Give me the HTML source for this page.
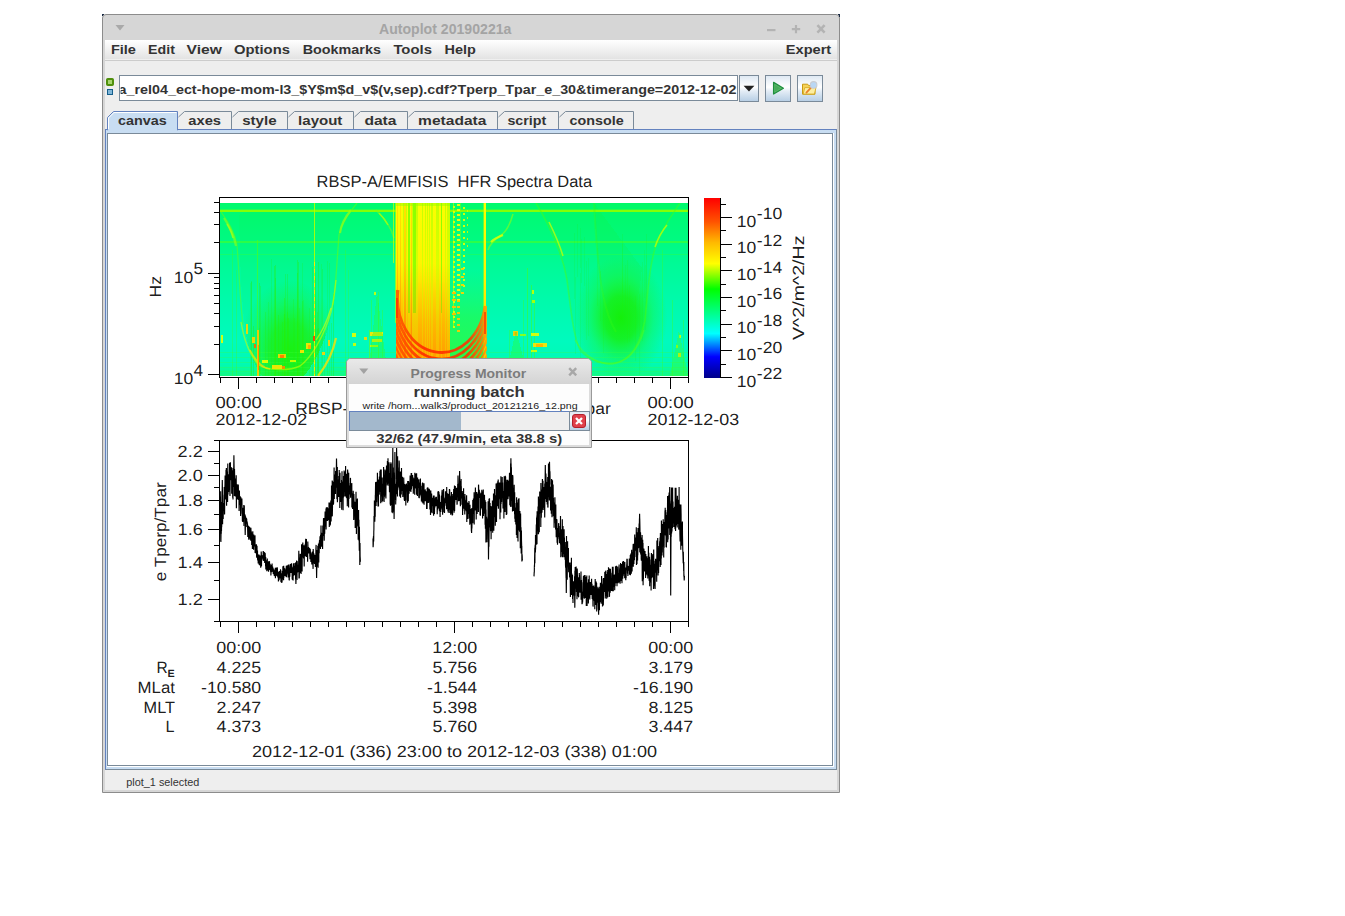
<!DOCTYPE html>
<html lang="en">
<head>
<meta charset="utf-8">
<title>Autoplot 20190221a</title>
<style>
html,body{margin:0;padding:0;background:#fff;}
body{width:1345px;height:916px;position:relative;overflow:hidden;font-family:"Liberation Sans", sans-serif;}
.abs{position:absolute;}
svg{position:absolute;left:0;top:0;overflow:visible;}
svg text{font-family:"Liberation Sans", sans-serif;white-space:pre;}

#win{left:102px;top:14px;width:738px;height:779px;background:#d6d6d6;border-radius:4px 4px 0 0;box-sizing:border-box;border:1px solid #8c8c8c;}
#content{left:105px;top:40px;width:732px;height:750px;background:#eeeeee;}
#menubar{left:105px;top:40px;width:732px;height:19px;background:linear-gradient(#ffffff,#e3e3e3);}
#mb1{left:105px;top:59px;width:732px;height:1px;background:#efefef;}
#mb2{left:105px;top:60px;width:732px;height:1px;background:#cccccc;}
#urlfield{left:119px;top:75px;width:619px;height:26px;box-sizing:border-box;border:1px solid #7a8a99;background:#fff;}
.btn{box-sizing:border-box;border:1px solid #7a8a99;background:linear-gradient(#dfe9f3 0%,#ffffff 45%,#e4edf6 60%,#b8cfe5 100%);}
#pane{left:105px;top:129px;width:732px;height:641px;box-sizing:border-box;background:#c8ddf2;border:1px solid #6382bf;border-right-color:#7a8a99;border-bottom-color:#7a8a99;}
#scroll{left:107px;top:133px;width:727px;height:634px;background:#fff;}
#canvas{left:107px;top:133px;width:726px;height:633px;box-sizing:border-box;border:1px solid #7a8a99;background:#fff;}

</style>
</head>
<body>
<div id="win" class="abs"></div>
<div class="abs" style="left:102px;top:14px;width:2px;height:1px;background:#1a2a44"></div>
<div class="abs" style="left:102px;top:15px;width:1px;height:1px;background:#1a2a44"></div>
<div class="abs" style="left:838px;top:14px;width:2px;height:1px;background:#1a2a44"></div>
<div class="abs" style="left:839px;top:15px;width:1px;height:2px;background:#1a2a44"></div>
<div id="content" class="abs"></div>
<div id="menubar" class="abs"></div><div id="mb1" class="abs"></div><div id="mb2" class="abs"></div>
<div id="urlfield" class="abs"></div>
<div class="abs btn" style="left:739px;top:75px;width:20px;height:27px"></div>
<div class="abs btn" style="left:765px;top:75px;width:26px;height:27px"></div>
<div class="abs btn" style="left:797px;top:75px;width:26px;height:27px"></div>
<div id="pane" class="abs"></div>
<div id="scroll" class="abs"></div>
<div id="canvas" class="abs"></div>
<svg width="1345" height="916" viewBox="0 0 1345 916">
<path d="M115.5 25 L124.5 25 L120 30.5 Z" fill="#a9a9a9"/>
<text x="379.0" y="34.2" font-size="13.8" font-weight="bold" fill="#a4a4a4" text-anchor="start" textLength="132.4" lengthAdjust="spacingAndGlyphs">Autoplot 20190221a</text>
<rect x="767" y="29" width="8.5" height="2.2" fill="#b3b3b3"/>
<path d="M791.8 29.1h8.4M796 25v8.3" stroke="#b3b3b3" stroke-width="2.2" fill="none"/>
<path d="M817.4 25.2l7.2 7.4M824.6 25.2l-7.2 7.4" stroke="#b3b3b3" stroke-width="2.6" fill="none"/>
<text x="110.9" y="54" font-size="13" font-weight="bold" fill="#333333" text-anchor="start" textLength="25.0" lengthAdjust="spacingAndGlyphs">File</text>
<text x="148.1" y="54" font-size="13" font-weight="bold" fill="#333333" text-anchor="start" textLength="26.8" lengthAdjust="spacingAndGlyphs">Edit</text>
<text x="186.6" y="54" font-size="13" font-weight="bold" fill="#333333" text-anchor="start" textLength="35.3" lengthAdjust="spacingAndGlyphs">View</text>
<text x="234.0" y="54" font-size="13" font-weight="bold" fill="#333333" text-anchor="start" textLength="55.9" lengthAdjust="spacingAndGlyphs">Options</text>
<text x="302.7" y="54" font-size="13" font-weight="bold" fill="#333333" text-anchor="start" textLength="78.2" lengthAdjust="spacingAndGlyphs">Bookmarks</text>
<text x="393.4" y="54" font-size="13" font-weight="bold" fill="#333333" text-anchor="start" textLength="38.5" lengthAdjust="spacingAndGlyphs">Tools</text>
<text x="444.6" y="54" font-size="13" font-weight="bold" fill="#333333" text-anchor="start" textLength="31.3" lengthAdjust="spacingAndGlyphs">Help</text>
<text x="785.8" y="54" font-size="13" font-weight="bold" fill="#333333" text-anchor="start" textLength="45.4" lengthAdjust="spacingAndGlyphs">Expert</text>
<rect x="107" y="79" width="6" height="6" rx="0.8" fill="#a6d46e" stroke="#4f8f0c" stroke-width="2"/>
<rect x="107.5" y="89.5" width="5" height="5" fill="#7fb6d8" stroke="#155e8c" stroke-width="1"/>
<clipPath id="urlclip"><rect x="120.6" y="76" width="616.4" height="24"/></clipPath>
<g clip-path="url(#urlclip)"><text x="118.6" y="94.1" font-size="13" font-weight="bold" fill="#333333" text-anchor="start" textLength="617.9" lengthAdjust="spacingAndGlyphs">a_rel04_ect-hope-mom-l3_$Y$m$d_v$(v,sep).cdf?Tperp_Tpar_e_30&amp;timerange=2012-12-02</text></g>
<path d="M743.6 85.8 L754.4 85.8 L749 91.4 Z" fill="#222"/>
<path d="M773.6 82.4 L783.4 88.2 L773.6 94 Z" fill="#5cba6a" stroke="#1f8f3f" stroke-width="1.3" stroke-linejoin="round"/>
<path d="M775 85 L780.6 88.2 L775 91.4 Z" fill="#3da552" opacity="0.7"/>
<path d="M802.5 84.2 h5.2 l1 1.4 h6.3 v8.6 h-12.5 z" fill="#f6d35a" stroke="#c99a12" stroke-width="1"/>
<path d="M803.2 94 l1.6-6.4 h11.2 l-1.6 6.4 z" fill="#fdeea0" stroke="#d4a81c" stroke-width="0.8"/>
<path d="M806.4 92.6 L811.2 87.4" stroke="#e9822a" stroke-width="1.8" stroke-linecap="round"/>
<circle cx="813.6" cy="84.9" r="3.3" fill="#b9d7f5" stroke="#c9ccd2" stroke-width="1.1"/>
<path d="M107.5 130 L107.5 117.5 L113.5 111.5 L177.5 111.5 L177.5 130 Z" fill="#c8ddf2" stroke="#6382bf" stroke-width="1"/>
<path d="M108.5 129 L108.5 118 L114 112.5 L176.5 112.5" fill="none" stroke="#ffffff" stroke-width="1"/>
<rect x="108" y="129" width="69" height="2" fill="#c8ddf2"/>
<rect x="105" y="129" width="3" height="1" fill="#6382bf"/>
<path d="M178.5 117 L184.5 111.5 L231.5 111.5 L231.5 129" fill="none" stroke="#7a8a99" stroke-width="1"/>
<path d="M232.5 117 L238.5 111.5 L287.5 111.5 L287.5 129" fill="none" stroke="#7a8a99" stroke-width="1"/>
<path d="M288.5 117 L294.5 111.5 L353.5 111.5 L353.5 129" fill="none" stroke="#7a8a99" stroke-width="1"/>
<path d="M354.5 117 L360.5 111.5 L407.5 111.5 L407.5 129" fill="none" stroke="#7a8a99" stroke-width="1"/>
<path d="M408.5 117 L414.5 111.5 L497.5 111.5 L497.5 129" fill="none" stroke="#7a8a99" stroke-width="1"/>
<path d="M498.5 117 L504.5 111.5 L558.5 111.5 L558.5 129" fill="none" stroke="#7a8a99" stroke-width="1"/>
<path d="M559.5 117 L565.5 111.5 L633.5 111.5 L633.5 129" fill="none" stroke="#7a8a99" stroke-width="1"/>
<text x="118.1" y="124.5" font-size="13" font-weight="bold" fill="#333333" text-anchor="start" textLength="48.7" lengthAdjust="spacingAndGlyphs">canvas</text>
<text x="188.3" y="124.5" font-size="13" font-weight="bold" fill="#333333" text-anchor="start" textLength="32.7" lengthAdjust="spacingAndGlyphs">axes</text>
<text x="242.2" y="124.5" font-size="13" font-weight="bold" fill="#333333" text-anchor="start" textLength="34.4" lengthAdjust="spacingAndGlyphs">style</text>
<text x="298.1" y="124.5" font-size="13" font-weight="bold" fill="#333333" text-anchor="start" textLength="44.3" lengthAdjust="spacingAndGlyphs">layout</text>
<text x="364.4" y="124.5" font-size="13" font-weight="bold" fill="#333333" text-anchor="start" textLength="32.1" lengthAdjust="spacingAndGlyphs">data</text>
<text x="418.1" y="124.5" font-size="13" font-weight="bold" fill="#333333" text-anchor="start" textLength="68.3" lengthAdjust="spacingAndGlyphs">metadata</text>
<text x="507.4" y="124.5" font-size="13" font-weight="bold" fill="#333333" text-anchor="start" textLength="38.8" lengthAdjust="spacingAndGlyphs">script</text>
<text x="569.5" y="124.5" font-size="13" font-weight="bold" fill="#333333" text-anchor="start" textLength="54.1" lengthAdjust="spacingAndGlyphs">console</text>
<text x="126.3" y="786" font-size="10.5" font-weight="normal" fill="#333333" text-anchor="start" textLength="73" lengthAdjust="spacingAndGlyphs">plot_1 selected</text>
</svg>
<svg width="1345" height="916" viewBox="0 0 1345 916" shape-rendering="crispEdges">
<defs>
<clipPath id="spc"><rect x="220" y="203" width="468" height="173"/></clipPath>
<clipPath id="ybk"><rect x="396" y="203" width="91" height="173"/></clipPath>
<linearGradient id="gbase" x1="0" y1="0" x2="0" y2="1"><stop offset="0" stop-color="#00fa6e"/><stop offset="0.22" stop-color="#00fa82"/><stop offset="0.35" stop-color="#00fa96"/><stop offset="0.55" stop-color="#00faaa"/><stop offset="0.8" stop-color="#00fabe"/><stop offset="0.93" stop-color="#00fab4"/><stop offset="1" stop-color="#14fa82"/></linearGradient>
<radialGradient id="gA" cx="290" cy="350" r="70" gradientUnits="userSpaceOnUse" gradientTransform="translate(290 350) scale(0.72 1) translate(-290 -350)"><stop offset="0" stop-color="#1cf000" stop-opacity="0.9"/><stop offset="0.4" stop-color="#1ef008" stop-opacity="0.75"/><stop offset="0.75" stop-color="#20f418" stop-opacity="0.3"/><stop offset="1" stop-color="#20f418" stop-opacity="0"/></radialGradient>
<linearGradient id="gOw" x1="0" y1="203" x2="0" y2="376" gradientUnits="userSpaceOnUse"><stop offset="0.35" stop-color="#ff8200" stop-opacity="0"/><stop offset="0.7" stop-color="#ff8200" stop-opacity="0.38"/><stop offset="1" stop-color="#ff6e00" stop-opacity="0.5"/></linearGradient>
<radialGradient id="gC" cx="621" cy="318" r="62" gradientUnits="userSpaceOnUse" gradientTransform="translate(621 318) scale(0.75 1) translate(-621 -318)"><stop offset="0" stop-color="#14f000" stop-opacity="0.95"/><stop offset="0.35" stop-color="#18f008" stop-opacity="0.8"/><stop offset="0.7" stop-color="#20f418" stop-opacity="0.3"/><stop offset="1" stop-color="#20f418" stop-opacity="0"/></radialGradient>
<linearGradient id="gY" x1="0" y1="203" x2="0" y2="376" gradientUnits="userSpaceOnUse"><stop offset="0" stop-color="#faff00"/><stop offset="0.45" stop-color="#fff200"/><stop offset="0.75" stop-color="#ffd200"/><stop offset="1" stop-color="#ffb400"/></linearGradient>
<linearGradient id="gO" x1="0" y1="203" x2="0" y2="376" gradientUnits="userSpaceOnUse"><stop offset="0" stop-color="#ffe400"/><stop offset="0.4" stop-color="#ffcc00"/><stop offset="1" stop-color="#ff8c00"/></linearGradient>
<linearGradient id="gL" x1="0" y1="203" x2="0" y2="376" gradientUnits="userSpaceOnUse"><stop offset="0" stop-color="#c8ff00"/><stop offset="0.6" stop-color="#e6ff00"/><stop offset="1" stop-color="#ffe000"/></linearGradient>
<linearGradient id="gG" x1="0" y1="203" x2="0" y2="376" gradientUnits="userSpaceOnUse"><stop offset="0" stop-color="#32fc32"/><stop offset="0.55" stop-color="#1efa3c"/><stop offset="0.8" stop-color="#14fa5a"/><stop offset="1" stop-color="#46ff1e"/></linearGradient>
<linearGradient id="gHz" x1="0" y1="270" x2="0" y2="376" gradientUnits="userSpaceOnUse"><stop offset="0" stop-color="#32fa1e" stop-opacity="0"/><stop offset="0.45" stop-color="#32fa1e" stop-opacity="0.5"/><stop offset="1" stop-color="#3cfa14" stop-opacity="0.75"/></linearGradient>
<linearGradient id="gArc" x1="396" y1="0" x2="487" y2="0" gradientUnits="userSpaceOnUse"><stop offset="0" stop-color="#ff5a00"/><stop offset="0.3" stop-color="#ff2800"/><stop offset="0.8" stop-color="#ff3200"/><stop offset="0.93" stop-color="#ff6e00"/><stop offset="1" stop-color="#ffaa00"/></linearGradient>
</defs>
<g clip-path="url(#spc)">
<rect x="220" y="203" width="468" height="173" fill="url(#gbase)"/>
<path d="M239 215 C240 260 241 300 246 335 C250 355 256 368 262 376 L304 376 C320 356 330 330 335 295 C337 260 338 235 345 215 C330 208 250 208 239 215 Z" fill="url(#gA)"/>
<path d="M239 215 C240 260 241 300 246 335 C250 355 256 368 262 376 L304 376 C320 356 330 330 335 295 C337 260 338 235 345 215 C330 208 250 208 239 215 Z" fill="#1ef01e" opacity="0.07"/>
<path d="M536 203 C548 225 560 250 566 275 C571 300 573 335 580 350 C590 362 605 365 615 363 C630 360 640 345 645 320 C648 290 650 260 657 243 C664 225 672 215 680 203 Z" fill="#1ef01e" opacity="0.08"/>
<rect x="550" y="240" width="130" height="136" fill="url(#gC)"/>
<path d="M594 203 C596 240 598 270 603 295 C606 310 610 320 616 330 L630 330 C636 310 640 290 642 268 Z" fill="#1ef01e" opacity="0.12"/>
<rect x="220" y="210" width="468" height="2" fill="#8cff00" opacity="0.95"/>
<rect x="220" y="209" width="468" height="1" fill="#50ff32" opacity="0.5"/>
<rect x="220" y="241" width="468" height="2" fill="#3cff32" opacity="0.7"/>
<rect x="220" y="254" width="468" height="1" fill="#28ff46" opacity="0.45"/>
<rect x="220" y="352" width="468" height="1" fill="#3cff3c" opacity="0.28"/>
<rect x="220" y="357" width="468" height="1" fill="#3cff3c" opacity="0.28"/>
<rect x="220" y="362" width="468" height="1" fill="#3cff3c" opacity="0.28"/>
<rect x="220" y="367" width="468" height="1" fill="#3cff3c" opacity="0.28"/>
<rect x="220" y="371" width="468" height="1" fill="#3cff3c" opacity="0.28"/>
<rect x="285" y="274" width="1" height="102" fill="#28f000" opacity="0.25"/>
<rect x="327" y="261" width="1" height="115" fill="#28f000" opacity="0.18"/>
<rect x="312" y="267" width="1" height="109" fill="#28f000" opacity="0.25"/>
<rect x="318" y="262" width="1" height="114" fill="#28f000" opacity="0.32"/>
<rect x="271" y="259" width="1" height="117" fill="#28f000" opacity="0.18"/>
<rect x="299" y="308" width="1" height="68" fill="#28f000" opacity="0.18"/>
<rect x="274" y="266" width="1" height="110" fill="#28f000" opacity="0.32"/>
<rect x="298" y="262" width="1" height="114" fill="#28f000" opacity="0.32"/>
<rect x="259" y="283" width="1" height="93" fill="#28f000" opacity="0.32"/>
<rect x="324" y="329" width="1" height="47" fill="#28f000" opacity="0.18"/>
<rect x="317" y="329" width="1" height="47" fill="#28f000" opacity="0.25"/>
<rect x="250" y="283" width="1" height="93" fill="#28f000" opacity="0.18"/>
<rect x="315" y="272" width="1" height="104" fill="#28f000" opacity="0.25"/>
<rect x="297" y="273" width="1" height="103" fill="#28f000" opacity="0.32"/>
<rect x="259" y="328" width="1" height="48" fill="#28f000" opacity="0.25"/>
<rect x="315" y="278" width="1" height="98" fill="#28f000" opacity="0.18"/>
<rect x="318" y="328" width="1" height="48" fill="#28f000" opacity="0.32"/>
<rect x="268" y="302" width="1" height="74" fill="#28f000" opacity="0.18"/>
<rect x="314" y="263" width="1" height="113" fill="#28f000" opacity="0.32"/>
<rect x="251" y="281" width="1" height="95" fill="#28f000" opacity="0.25"/>
<rect x="331" y="323" width="1" height="53" fill="#28f000" opacity="0.25"/>
<rect x="284" y="314" width="1" height="62" fill="#28f000" opacity="0.32"/>
<rect x="302" y="301" width="1" height="75" fill="#28f000" opacity="0.25"/>
<rect x="275" y="278" width="1" height="98" fill="#28f000" opacity="0.32"/>
<rect x="275" y="265" width="1" height="111" fill="#28f000" opacity="0.32"/>
<rect x="282" y="322" width="1" height="54" fill="#28f000" opacity="0.25"/>
<rect x="287" y="312" width="1" height="64" fill="#28f000" opacity="0.25"/>
<rect x="321" y="264" width="1" height="112" fill="#28f000" opacity="0.18"/>
<rect x="309" y="308" width="1" height="68" fill="#28f000" opacity="0.18"/>
<rect x="287" y="274" width="1" height="102" fill="#28f000" opacity="0.25"/>
<rect x="297" y="260" width="1" height="116" fill="#28f000" opacity="0.32"/>
<rect x="253" y="326" width="1" height="50" fill="#28f000" opacity="0.32"/>
<rect x="284" y="298" width="1" height="78" fill="#28f000" opacity="0.32"/>
<rect x="288" y="318" width="1" height="58" fill="#28f000" opacity="0.32"/>
<rect x="302" y="263" width="1" height="113" fill="#28f000" opacity="0.18"/>
<rect x="278" y="315" width="1" height="61" fill="#28f000" opacity="0.32"/>
<rect x="329" y="263" width="1" height="113" fill="#28f000" opacity="0.18"/>
<rect x="333" y="294" width="1" height="82" fill="#28f000" opacity="0.32"/>
<rect x="317" y="312" width="1" height="64" fill="#28f000" opacity="0.25"/>
<rect x="293" y="299" width="1" height="77" fill="#28f000" opacity="0.18"/>
<rect x="303" y="300" width="1" height="76" fill="#28f000" opacity="0.18"/>
<rect x="322" y="269" width="1" height="107" fill="#28f000" opacity="0.25"/>
<rect x="251" y="282" width="1" height="94" fill="#28f000" opacity="0.25"/>
<rect x="260" y="286" width="1" height="90" fill="#28f000" opacity="0.25"/>
<rect x="294" y="318" width="1" height="58" fill="#28f000" opacity="0.18"/>
<rect x="265" y="312" width="1" height="64" fill="#28f000" opacity="0.25"/>
<rect x="644" y="250" width="1" height="48" fill="#28f000" opacity="0.13"/>
<rect x="629" y="285" width="1" height="57" fill="#28f000" opacity="0.13"/>
<rect x="627" y="260" width="1" height="83" fill="#28f000" opacity="0.13"/>
<rect x="622" y="244" width="1" height="49" fill="#28f000" opacity="0.13"/>
<rect x="584" y="237" width="1" height="49" fill="#28f000" opacity="0.13"/>
<rect x="603" y="299" width="1" height="54" fill="#28f000" opacity="0.13"/>
<rect x="575" y="277" width="1" height="77" fill="#28f000" opacity="0.13"/>
<rect x="597" y="248" width="1" height="58" fill="#28f000" opacity="0.13"/>
<rect x="574" y="233" width="1" height="66" fill="#28f000" opacity="0.13"/>
<rect x="642" y="262" width="1" height="79" fill="#28f000" opacity="0.13"/>
<rect x="646" y="255" width="1" height="48" fill="#28f000" opacity="0.13"/>
<rect x="639" y="294" width="1" height="81" fill="#28f000" opacity="0.13"/>
<rect x="580" y="273" width="1" height="89" fill="#28f000" opacity="0.13"/>
<rect x="645" y="265" width="1" height="65" fill="#28f000" opacity="0.13"/>
<rect x="625" y="265" width="1" height="46" fill="#28f000" opacity="0.13"/>
<rect x="635" y="296" width="1" height="65" fill="#28f000" opacity="0.13"/>
<rect x="581" y="239" width="1" height="44" fill="#28f000" opacity="0.13"/>
<rect x="600" y="271" width="1" height="50" fill="#28f000" opacity="0.13"/>
<rect x="588" y="258" width="1" height="78" fill="#28f000" opacity="0.13"/>
<rect x="580" y="228" width="1" height="40" fill="#28f000" opacity="0.13"/>
<rect x="646" y="234" width="1" height="74" fill="#28f000" opacity="0.13"/>
<rect x="586" y="261" width="1" height="79" fill="#28f000" opacity="0.13"/>
<rect x="577" y="224" width="1" height="53" fill="#28f000" opacity="0.13"/>
<rect x="622" y="234" width="1" height="80" fill="#28f000" opacity="0.13"/>
<path d="M221 212 C228 222 234 230 237 245 C239 270 240 300 243 325" fill="none" stroke="#64ff14" stroke-width="1.3" opacity="0.5" shape-rendering="auto"/>
<path d="M224 218 C229 226 234 234 236 246" fill="none" stroke="#96ff10" stroke-width="2.2" opacity="0.6" shape-rendering="auto"/>
<path d="M227 224 C230 229 232 233 233 238" fill="none" stroke="#c8ff00" stroke-width="1.6" opacity="0.6" shape-rendering="auto"/>
<path d="M357 203 C350 212 342 222 339 235 C337 260 336 285 333 305" fill="none" stroke="#64ff14" stroke-width="1.3" opacity="0.55" shape-rendering="auto"/>
<path d="M351 210 C346 216 341 225 340 233" fill="none" stroke="#a0ff10" stroke-width="2.2" opacity="0.65" shape-rendering="auto"/>
<path d="M241 322 C244 340 250 356 259 365 C268 371 290 371 300 366 C312 357 324 336 331 312 C334 300 335 290 336 280" fill="none" stroke="#c8ff00" stroke-width="1.4" opacity="0.6" shape-rendering="auto"/>
<path d="M250 350 C256 362 262 368 270 369" fill="none" stroke="#ffe000" stroke-width="1.6" opacity="0.7" shape-rendering="auto"/>
<path d="M316 340 C322 332 328 318 331 308" fill="none" stroke="#e6ff00" stroke-width="1.3" opacity="0.6" shape-rendering="auto"/>
<path d="M318 376 C326 366 333 352 336 338" fill="none" stroke="#ffe000" stroke-width="2.2" opacity="0.8" shape-rendering="auto"/>
<path d="M376 210 C384 218 391 226 394 238" fill="none" stroke="#78ff14" stroke-width="1.6" opacity="0.55" shape-rendering="auto"/>
<path d="M379 213 C383 217 386 221 388 225" fill="none" stroke="#c8ff00" stroke-width="1.6" opacity="0.6" shape-rendering="auto"/>
<path d="M488 250 C490 244 494 240 500 236 C506 232 510 225 513 214" fill="none" stroke="#8cff14" stroke-width="1.6" opacity="0.6" shape-rendering="auto"/>
<path d="M491 242 C494 239 498 237 503 235" fill="none" stroke="#e6ff00" stroke-width="2.2" opacity="0.8" shape-rendering="auto"/>
<path d="M536 203 C544 216 552 232 558 248 C562 258 565 268 567 280 C571 310 573 335 580 350 C590 362 605 365 615 363 C630 360 640 345 645 320 C648 290 650 260 657 243 C664 225 672 215 680 203" fill="none" stroke="#46ff14" stroke-width="1.6" opacity="0.45" shape-rendering="auto"/>
<path d="M549 222 C554 232 559 243 563 256" fill="none" stroke="#c8ff00" stroke-width="1.6" opacity="0.75" shape-rendering="auto"/>
<path d="M655 247 C658 238 662 231 667 225" fill="none" stroke="#c8ff00" stroke-width="1.6" opacity="0.75" shape-rendering="auto"/>
<path d="M594 203 C596 240 598 270 603 295 C606 310 610 322 616 332" fill="none" stroke="#3cf814" stroke-width="2" opacity="0.3" shape-rendering="auto"/>
<path d="M575 340 C585 358 600 364 612 364 C628 362 638 350 644 330" fill="none" stroke="#64ff14" stroke-width="1.5" opacity="0.4" shape-rendering="auto"/>
<rect x="314" y="203" width="1" height="173" fill="#b4ff00" opacity="0.9"/>
<rect x="314" y="262" width="1" height="4" fill="#ffe600"/>
<rect x="314" y="269" width="1" height="4" fill="#ffe600"/>
<rect x="314" y="276" width="1" height="4" fill="#ffe600"/>
<rect x="314" y="283" width="1" height="4" fill="#ffe600"/>
<rect x="314" y="290" width="1" height="4" fill="#ffe600"/>
<rect x="314" y="297" width="1" height="4" fill="#ffe600"/>
<rect x="314" y="304" width="1" height="4" fill="#ffe600"/>
<rect x="314" y="311" width="1" height="4" fill="#ffe600"/>
<rect x="314" y="318" width="1" height="4" fill="#ffe600"/>
<rect x="314" y="325" width="1" height="4" fill="#ffe600"/>
<rect x="314" y="332" width="1" height="4" fill="#ffe600"/>
<rect x="314" y="339" width="1" height="4" fill="#ffe600"/>
<rect x="314" y="346" width="1" height="4" fill="#ffe600"/>
<rect x="314" y="353" width="1" height="4" fill="#ffe600"/>
<rect x="314" y="360" width="1" height="4" fill="#ffe600"/>
<rect x="314" y="367" width="1" height="4" fill="#ffe600"/>
<rect x="314" y="374" width="1" height="4" fill="#ffe600"/>
<rect x="257" y="240" width="1" height="136" fill="#50ff14" opacity="0.6"/>
<rect x="257" y="330" width="2" height="46" fill="#ffc800" opacity="0.9"/>
<rect x="258" y="345" width="1" height="25" fill="#ff8c00"/>
<rect x="369" y="330" width="1" height="46" fill="#64ff14" opacity="0.6"/>
<rect x="527" y="268" width="1" height="108" fill="#46ff14" opacity="0.5"/>
<rect x="531" y="285" width="1" height="91" fill="#46ff14" opacity="0.5"/>
<rect x="534" y="300" width="1" height="76" fill="#46ff14" opacity="0.45"/>
<rect x="523" y="300" width="1" height="76" fill="#46ff14" opacity="0.35"/>
<rect x="378" y="292" width="1" height="84" fill="#46ff14" opacity="0.45"/>
<rect x="371" y="300" width="1" height="76" fill="#46ff14" opacity="0.4"/>
<rect x="382" y="310" width="1" height="66" fill="#46ff14" opacity="0.35"/>
<rect x="509" y="330" width="1" height="46" fill="#46ff14" opacity="0.35"/>
<rect x="345" y="250" width="1" height="126" fill="#46ff14" opacity="0.3"/>
<rect x="348" y="270" width="1" height="106" fill="#46ff14" opacity="0.3"/>
<rect x="232" y="250" width="1" height="126" fill="#46ff14" opacity="0.3"/>
<rect x="236" y="270" width="1" height="106" fill="#46ff14" opacity="0.3"/>
<rect x="662" y="250" width="1" height="126" fill="#46ff14" opacity="0.3"/>
<rect x="672" y="300" width="1" height="76" fill="#46ff14" opacity="0.35"/>
<rect x="683" y="320" width="1" height="56" fill="#46ff14" opacity="0.35"/>
<rect x="246" y="324" width="2" height="10" fill="#ffd200" opacity="0.9"/>
<rect x="252" y="337" width="3" height="6" fill="#ffd200" opacity="0.9"/>
<rect x="254" y="344" width="2" height="4" fill="#ff6400" opacity="0.9"/>
<rect x="221" y="335" width="2" height="8" fill="#e6ff00" opacity="0.9"/>
<rect x="278" y="354" width="8" height="4" fill="#ffd200" opacity="0.9"/>
<rect x="280" y="355" width="4" height="3" fill="#ff7800" opacity="0.9"/>
<rect x="272" y="365" width="10" height="4" fill="#ffe600" opacity="0.9"/>
<rect x="282" y="366" width="3" height="3" fill="#ff8c00" opacity="0.9"/>
<rect x="300" y="350" width="4" height="3" fill="#ffe600" opacity="0.9"/>
<rect x="306" y="343" width="5" height="6" fill="#ffe600" opacity="0.9"/>
<rect x="308" y="345" width="3" height="4" fill="#ffaa00" opacity="0.9"/>
<rect x="313" y="336" width="2" height="5" fill="#ff3c00" opacity="0.9"/>
<rect x="262" y="360" width="6" height="3" fill="#f0ff00" opacity="0.9"/>
<rect x="290" y="360" width="6" height="2" fill="#d2ff00" opacity="0.9"/>
<rect x="322" y="352" width="3" height="3" fill="#ffd200" opacity="0.9"/>
<rect x="328" y="340" width="2" height="6" fill="#ffd200" opacity="0.9"/>
<rect x="352" y="333" width="4" height="4" fill="#e6ff00" opacity="0.9"/>
<rect x="353" y="343" width="3" height="3" fill="#d2ff00" opacity="0.9"/>
<rect x="364" y="337" width="3" height="3" fill="#ffd200" opacity="0.9"/>
<rect x="370" y="332" width="13" height="4" fill="#ffe600" opacity="0.9"/>
<rect x="372" y="339" width="10" height="3" fill="#fff000" opacity="0.9"/>
<rect x="370" y="345" width="8" height="2" fill="#c8ff00" opacity="0.9"/>
<rect x="374" y="292" width="2" height="3" fill="#d2ff00" opacity="0.9"/>
<rect x="513" y="331" width="5" height="5" fill="#ffd200" opacity="0.9"/>
<rect x="514" y="332" width="3" height="3" fill="#ffb400" opacity="0.9"/>
<rect x="520" y="334" width="6" height="2" fill="#96ff14" opacity="0.9"/>
<rect x="531" y="333" width="8" height="3" fill="#e6ff00" opacity="0.9"/>
<rect x="533" y="343" width="14" height="4" fill="#ffe600" opacity="0.9"/>
<rect x="536" y="344" width="7" height="3" fill="#ffb400" opacity="0.9"/>
<rect x="531" y="350" width="6" height="2" fill="#d2ff00" opacity="0.9"/>
<rect x="532" y="290" width="2" height="4" fill="#c8ff00" opacity="0.9"/>
<rect x="532" y="300" width="3" height="3" fill="#b4ff00" opacity="0.9"/>
<rect x="678" y="353" width="3" height="4" fill="#ffe600" opacity="0.9"/>
<rect x="679" y="335" width="2" height="3" fill="#d2ff00" opacity="0.9"/>
<rect x="676" y="345" width="2" height="3" fill="#b4ff00" opacity="0.9"/>
<path d="M377 292 L368 376 L388 376 Z" fill="#32ff1e" opacity="0.35"/>
<path d="M516 330 L506 376 L528 376 Z" fill="#32ff1e" opacity="0.35"/>
<path d="M679 330 L670 376 L688 376 Z" fill="#46ff1e" opacity="0.35"/>
<rect x="396" y="203" width="1" height="173" fill="url(#gY)"/>
<rect x="397" y="203" width="1" height="173" fill="url(#gO)"/>
<rect x="398" y="203" width="1" height="173" fill="url(#gY)"/>
<rect x="399" y="203" width="1" height="173" fill="url(#gY)"/>
<rect x="400" y="203" width="1" height="173" fill="url(#gO)"/>
<rect x="401" y="203" width="1" height="173" fill="url(#gY)"/>
<rect x="402" y="203" width="1" height="173" fill="url(#gY)"/>
<rect x="403" y="203" width="1" height="173" fill="url(#gL)"/>
<rect x="404" y="203" width="1" height="173" fill="url(#gO)"/>
<rect x="405" y="203" width="1" height="173" fill="url(#gO)"/>
<rect x="406" y="203" width="1" height="173" fill="url(#gL)"/>
<rect x="407" y="203" width="1" height="173" fill="url(#gY)"/>
<rect x="408" y="203" width="1" height="173" fill="url(#gL)"/>
<rect x="408" y="203" width="1" height="110" fill="#78ff00" opacity="0.75"/>
<rect x="409" y="203" width="1" height="173" fill="url(#gL)"/>
<rect x="409" y="203" width="1" height="110" fill="#78ff00" opacity="0.75"/>
<rect x="410" y="203" width="1" height="173" fill="url(#gY)"/>
<rect x="411" y="203" width="1" height="173" fill="url(#gO)"/>
<rect x="412" y="203" width="1" height="173" fill="url(#gL)"/>
<rect x="413" y="203" width="1" height="173" fill="url(#gL)"/>
<rect x="413" y="203" width="1" height="110" fill="#78ff00" opacity="0.75"/>
<rect x="414" y="203" width="1" height="173" fill="url(#gL)"/>
<rect x="414" y="203" width="1" height="110" fill="#78ff00" opacity="0.75"/>
<rect x="415" y="203" width="1" height="173" fill="url(#gL)"/>
<rect x="415" y="203" width="1" height="110" fill="#78ff00" opacity="0.75"/>
<rect x="416" y="203" width="1" height="173" fill="url(#gL)"/>
<rect x="417" y="203" width="1" height="173" fill="url(#gL)"/>
<rect x="418" y="203" width="1" height="173" fill="url(#gY)"/>
<rect x="419" y="203" width="1" height="173" fill="url(#gY)"/>
<rect x="420" y="203" width="1" height="173" fill="url(#gY)"/>
<rect x="421" y="203" width="1" height="173" fill="url(#gY)"/>
<rect x="422" y="203" width="1" height="173" fill="url(#gL)"/>
<rect x="423" y="203" width="1" height="173" fill="url(#gY)"/>
<rect x="424" y="203" width="1" height="173" fill="url(#gY)"/>
<rect x="425" y="203" width="1" height="173" fill="url(#gL)"/>
<rect x="426" y="203" width="1" height="173" fill="url(#gY)"/>
<rect x="427" y="203" width="1" height="173" fill="url(#gL)"/>
<rect x="428" y="203" width="1" height="173" fill="url(#gY)"/>
<rect x="429" y="203" width="1" height="173" fill="url(#gL)"/>
<rect x="430" y="203" width="1" height="173" fill="url(#gY)"/>
<rect x="431" y="203" width="1" height="173" fill="url(#gL)"/>
<rect x="432" y="203" width="1" height="173" fill="url(#gL)"/>
<rect x="433" y="203" width="1" height="173" fill="url(#gY)"/>
<rect x="434" y="203" width="1" height="173" fill="url(#gY)"/>
<rect x="435" y="203" width="1" height="173" fill="url(#gY)"/>
<rect x="436" y="203" width="1" height="173" fill="url(#gL)"/>
<rect x="437" y="203" width="1" height="173" fill="url(#gL)"/>
<rect x="438" y="203" width="1" height="173" fill="url(#gL)"/>
<rect x="439" y="203" width="1" height="173" fill="url(#gY)"/>
<rect x="440" y="203" width="1" height="173" fill="url(#gY)"/>
<rect x="441" y="203" width="1" height="173" fill="url(#gL)"/>
<rect x="441" y="203" width="1" height="110" fill="#78ff00" opacity="0.75"/>
<rect x="442" y="203" width="1" height="173" fill="url(#gY)"/>
<rect x="443" y="203" width="1" height="173" fill="url(#gY)"/>
<rect x="444" y="203" width="1" height="173" fill="url(#gY)"/>
<rect x="445" y="203" width="1" height="173" fill="url(#gL)"/>
<rect x="446" y="203" width="1" height="173" fill="url(#gY)"/>
<rect x="447" y="203" width="1" height="173" fill="url(#gL)"/>
<rect x="448" y="203" width="1" height="173" fill="url(#gL)"/>
<rect x="449" y="203" width="1" height="173" fill="url(#gL)"/>
<rect x="393" y="203" width="1" height="60" fill="#d2ff00" opacity="0.7"/>
<rect x="395" y="203" width="1" height="120" fill="#b4ff00" opacity="0.7"/>
<rect x="396" y="203" width="54" height="3" fill="#8cff00" opacity="0.45"/>
<rect x="396" y="203" width="54" height="173" fill="url(#gOw)"/>
<rect x="450" y="270" width="34" height="106" fill="url(#gHz)"/>
<rect x="453" y="203" width="1" height="125" fill="#b4ff00" opacity="0.7"/>
<rect x="460" y="203" width="1" height="90" fill="#96ff00" opacity="0.45"/>
<rect x="453" y="206" width="2" height="2" fill="#e6ff00" opacity="0.92"/>
<rect x="453" y="211" width="2" height="2" fill="#e6ff00" opacity="0.92"/>
<rect x="453" y="216" width="2" height="2" fill="#e6ff00" opacity="0.92"/>
<rect x="453" y="221" width="2" height="2" fill="#e6ff00" opacity="0.92"/>
<rect x="453" y="226" width="2" height="2" fill="#e6ff00" opacity="0.92"/>
<rect x="453" y="231" width="2" height="2" fill="#e6ff00" opacity="0.92"/>
<rect x="453" y="236" width="2" height="2" fill="#e6ff00" opacity="0.92"/>
<rect x="453" y="241" width="2" height="2" fill="#e6ff00" opacity="0.92"/>
<rect x="453" y="246" width="2" height="2" fill="#e6ff00" opacity="0.92"/>
<rect x="453" y="251" width="2" height="2" fill="#e6ff00" opacity="0.92"/>
<rect x="453" y="256" width="2" height="2" fill="#e6ff00" opacity="0.92"/>
<rect x="453" y="261" width="2" height="2" fill="#e6ff00" opacity="0.92"/>
<rect x="453" y="266" width="2" height="2" fill="#e6ff00" opacity="0.92"/>
<rect x="453" y="271" width="2" height="2" fill="#e6ff00" opacity="0.92"/>
<rect x="453" y="276" width="2" height="2" fill="#e6ff00" opacity="0.92"/>
<rect x="453" y="281" width="2" height="2" fill="#e6ff00" opacity="0.92"/>
<rect x="453" y="286" width="2" height="2" fill="#e6ff00" opacity="0.92"/>
<rect x="453" y="291" width="2" height="2" fill="#e6ff00" opacity="0.92"/>
<rect x="453" y="296" width="2" height="2" fill="#e6ff00" opacity="0.92"/>
<rect x="453" y="301" width="2" height="2" fill="#e6ff00" opacity="0.92"/>
<rect x="453" y="306" width="2" height="2" fill="#e6ff00" opacity="0.92"/>
<rect x="453" y="311" width="2" height="2" fill="#e6ff00" opacity="0.92"/>
<rect x="453" y="316" width="2" height="2" fill="#e6ff00" opacity="0.92"/>
<rect x="453" y="321" width="2" height="2" fill="#e6ff00" opacity="0.92"/>
<rect x="453" y="326" width="2" height="2" fill="#e6ff00" opacity="0.92"/>
<rect x="457" y="204" width="3" height="2" fill="#faff00" opacity="0.92"/>
<rect x="457" y="209" width="3" height="2" fill="#faff00" opacity="0.92"/>
<rect x="457" y="214" width="3" height="2" fill="#faff00" opacity="0.92"/>
<rect x="457" y="219" width="3" height="2" fill="#faff00" opacity="0.92"/>
<rect x="457" y="224" width="3" height="2" fill="#faff00" opacity="0.92"/>
<rect x="457" y="229" width="3" height="2" fill="#faff00" opacity="0.92"/>
<rect x="457" y="234" width="3" height="2" fill="#faff00" opacity="0.92"/>
<rect x="457" y="239" width="3" height="2" fill="#faff00" opacity="0.92"/>
<rect x="457" y="244" width="3" height="2" fill="#faff00" opacity="0.92"/>
<rect x="457" y="249" width="3" height="2" fill="#faff00" opacity="0.92"/>
<rect x="457" y="254" width="3" height="2" fill="#faff00" opacity="0.92"/>
<rect x="457" y="259" width="3" height="2" fill="#faff00" opacity="0.92"/>
<rect x="457" y="264" width="3" height="2" fill="#faff00" opacity="0.92"/>
<rect x="457" y="269" width="3" height="2" fill="#faff00" opacity="0.92"/>
<rect x="457" y="274" width="3" height="2" fill="#faff00" opacity="0.92"/>
<rect x="457" y="279" width="3" height="2" fill="#faff00" opacity="0.92"/>
<rect x="457" y="284" width="3" height="2" fill="#faff00" opacity="0.92"/>
<rect x="457" y="289" width="3" height="2" fill="#faff00" opacity="0.92"/>
<rect x="457" y="294" width="3" height="2" fill="#faff00" opacity="0.92"/>
<rect x="457" y="299" width="3" height="2" fill="#faff00" opacity="0.92"/>
<rect x="457" y="300" width="3" height="2" fill="#ffc800" opacity="0.92"/>
<rect x="457" y="306" width="3" height="2" fill="#ffc800" opacity="0.92"/>
<rect x="457" y="312" width="3" height="2" fill="#ffc800" opacity="0.92"/>
<rect x="457" y="318" width="3" height="2" fill="#ffc800" opacity="0.92"/>
<rect x="457" y="324" width="3" height="2" fill="#ffc800" opacity="0.92"/>
<rect x="457" y="330" width="3" height="2" fill="#ffc800" opacity="0.92"/>
<rect x="463" y="207" width="2" height="2" fill="#e6ff00" opacity="0.92"/>
<rect x="463" y="213" width="2" height="2" fill="#e6ff00" opacity="0.92"/>
<rect x="463" y="219" width="2" height="2" fill="#e6ff00" opacity="0.92"/>
<rect x="463" y="225" width="2" height="2" fill="#e6ff00" opacity="0.92"/>
<rect x="463" y="231" width="2" height="2" fill="#e6ff00" opacity="0.92"/>
<rect x="463" y="237" width="2" height="2" fill="#e6ff00" opacity="0.92"/>
<rect x="463" y="243" width="2" height="2" fill="#e6ff00" opacity="0.92"/>
<rect x="463" y="249" width="2" height="2" fill="#e6ff00" opacity="0.92"/>
<rect x="463" y="255" width="2" height="2" fill="#e6ff00" opacity="0.92"/>
<rect x="463" y="261" width="2" height="2" fill="#e6ff00" opacity="0.92"/>
<rect x="463" y="267" width="2" height="2" fill="#e6ff00" opacity="0.92"/>
<rect x="463" y="273" width="2" height="2" fill="#e6ff00" opacity="0.92"/>
<rect x="463" y="279" width="2" height="2" fill="#e6ff00" opacity="0.92"/>
<rect x="463" y="285" width="2" height="2" fill="#e6ff00" opacity="0.92"/>
<rect x="467" y="210" width="1" height="2" fill="#c8ff00" opacity="0.92"/>
<rect x="467" y="217" width="1" height="2" fill="#c8ff00" opacity="0.92"/>
<rect x="467" y="224" width="1" height="2" fill="#c8ff00" opacity="0.92"/>
<rect x="467" y="231" width="1" height="2" fill="#c8ff00" opacity="0.92"/>
<rect x="467" y="238" width="1" height="2" fill="#c8ff00" opacity="0.92"/>
<rect x="467" y="245" width="1" height="2" fill="#c8ff00" opacity="0.92"/>
<rect x="461" y="268" width="3" height="2" fill="#ffd200" opacity="0.92"/>
<rect x="461" y="276" width="3" height="2" fill="#ffd200" opacity="0.92"/>
<rect x="461" y="284" width="3" height="2" fill="#ffd200" opacity="0.92"/>
<rect x="461" y="292" width="3" height="2" fill="#ffd200" opacity="0.92"/>
<rect x="452" y="292" width="4" height="2" fill="#ffbe00" opacity="0.92"/>
<rect x="452" y="299" width="4" height="2" fill="#ffbe00" opacity="0.92"/>
<rect x="452" y="306" width="4" height="2" fill="#ffbe00" opacity="0.92"/>
<rect x="452" y="313" width="4" height="2" fill="#ffbe00" opacity="0.92"/>
<rect x="484" y="203" width="2" height="173" fill="url(#gY)"/>
<rect x="483" y="203" width="1" height="173" fill="#c8ff00" opacity="0.5"/>
<g clip-path="url(#ybk)">
<path d="M398.0 290 A42.0 52.0 0 0 0 485.0 306" fill="none" stroke="url(#gArc)" stroke-width="2.8" opacity="0.88" shape-rendering="auto"/>
<path d="M395.7 290 A44.3 58.5 0 0 0 487.3 306" fill="none" stroke="url(#gArc)" stroke-width="2.8" opacity="0.88" shape-rendering="auto"/>
<path d="M393.4 290 A46.6 65.0 0 0 0 489.6 306" fill="none" stroke="url(#gArc)" stroke-width="2.8" opacity="0.88" shape-rendering="auto"/>
<path d="M391.1 290 A48.9 71.5 0 0 0 491.9 306" fill="none" stroke="url(#gArc)" stroke-width="2.8" opacity="0.88" shape-rendering="auto"/>
<path d="M388.8 290 A51.2 78.0 0 0 0 494.2 306" fill="none" stroke="url(#gArc)" stroke-width="2.8" opacity="0.88" shape-rendering="auto"/>
<path d="M386.5 290 A53.5 84.5 0 0 0 496.5 306" fill="none" stroke="url(#gArc)" stroke-width="2" opacity="0.88" shape-rendering="auto"/>
<path d="M384.2 290 A55.8 91.0 0 0 0 498.8 306" fill="none" stroke="url(#gArc)" stroke-width="2" opacity="0.88" shape-rendering="auto"/>
<rect x="396" y="298" width="2" height="20" fill="#ff3c00"/>
<rect x="484" y="312" width="2" height="22" fill="#ff5000"/>
</g>
</g>
<rect x="219" y="197" width="470" height="1" fill="#000"/>
<rect x="219" y="377" width="470" height="1" fill="#000"/>
<rect x="219" y="197" width="1" height="181" fill="#000"/>
<rect x="688" y="197" width="1" height="181" fill="#000"/>
<rect x="208" y="374" width="11" height="1" fill="#000"/>
<rect x="214" y="344" width="5" height="1" fill="#000"/>
<rect x="214" y="326" width="5" height="1" fill="#000"/>
<rect x="214" y="313" width="5" height="1" fill="#000"/>
<rect x="214" y="303" width="5" height="1" fill="#000"/>
<rect x="214" y="295" width="5" height="1" fill="#000"/>
<rect x="214" y="288" width="5" height="1" fill="#000"/>
<rect x="214" y="283" width="5" height="1" fill="#000"/>
<rect x="214" y="277" width="5" height="1" fill="#000"/>
<rect x="208" y="273" width="11" height="1" fill="#000"/>
<rect x="214" y="242" width="5" height="1" fill="#000"/>
<rect x="214" y="224" width="5" height="1" fill="#000"/>
<rect x="214" y="212" width="5" height="1" fill="#000"/>
<rect x="214" y="202" width="5" height="1" fill="#000"/>
<rect x="220" y="378" width="1" height="5" fill="#000"/>
<rect x="220" y="622" width="1" height="5" fill="#000"/>
<rect x="238" y="378" width="1" height="11" fill="#000"/>
<rect x="238" y="622" width="1" height="11" fill="#000"/>
<rect x="256" y="378" width="1" height="5" fill="#000"/>
<rect x="256" y="622" width="1" height="5" fill="#000"/>
<rect x="274" y="378" width="1" height="5" fill="#000"/>
<rect x="274" y="622" width="1" height="5" fill="#000"/>
<rect x="292" y="378" width="1" height="5" fill="#000"/>
<rect x="292" y="622" width="1" height="5" fill="#000"/>
<rect x="310" y="378" width="1" height="5" fill="#000"/>
<rect x="310" y="622" width="1" height="5" fill="#000"/>
<rect x="328" y="378" width="1" height="5" fill="#000"/>
<rect x="328" y="622" width="1" height="5" fill="#000"/>
<rect x="346" y="378" width="1" height="5" fill="#000"/>
<rect x="346" y="622" width="1" height="5" fill="#000"/>
<rect x="364" y="378" width="1" height="5" fill="#000"/>
<rect x="364" y="622" width="1" height="5" fill="#000"/>
<rect x="382" y="378" width="1" height="5" fill="#000"/>
<rect x="382" y="622" width="1" height="5" fill="#000"/>
<rect x="400" y="378" width="1" height="5" fill="#000"/>
<rect x="400" y="622" width="1" height="5" fill="#000"/>
<rect x="418" y="378" width="1" height="5" fill="#000"/>
<rect x="418" y="622" width="1" height="5" fill="#000"/>
<rect x="436" y="378" width="1" height="5" fill="#000"/>
<rect x="436" y="622" width="1" height="5" fill="#000"/>
<rect x="454" y="378" width="1" height="11" fill="#000"/>
<rect x="454" y="622" width="1" height="11" fill="#000"/>
<rect x="472" y="378" width="1" height="5" fill="#000"/>
<rect x="472" y="622" width="1" height="5" fill="#000"/>
<rect x="490" y="378" width="1" height="5" fill="#000"/>
<rect x="490" y="622" width="1" height="5" fill="#000"/>
<rect x="508" y="378" width="1" height="5" fill="#000"/>
<rect x="508" y="622" width="1" height="5" fill="#000"/>
<rect x="526" y="378" width="1" height="5" fill="#000"/>
<rect x="526" y="622" width="1" height="5" fill="#000"/>
<rect x="544" y="378" width="1" height="5" fill="#000"/>
<rect x="544" y="622" width="1" height="5" fill="#000"/>
<rect x="562" y="378" width="1" height="5" fill="#000"/>
<rect x="562" y="622" width="1" height="5" fill="#000"/>
<rect x="580" y="378" width="1" height="5" fill="#000"/>
<rect x="580" y="622" width="1" height="5" fill="#000"/>
<rect x="598" y="378" width="1" height="5" fill="#000"/>
<rect x="598" y="622" width="1" height="5" fill="#000"/>
<rect x="616" y="378" width="1" height="5" fill="#000"/>
<rect x="616" y="622" width="1" height="5" fill="#000"/>
<rect x="634" y="378" width="1" height="5" fill="#000"/>
<rect x="634" y="622" width="1" height="5" fill="#000"/>
<rect x="652" y="378" width="1" height="5" fill="#000"/>
<rect x="652" y="622" width="1" height="5" fill="#000"/>
<rect x="670" y="378" width="1" height="11" fill="#000"/>
<rect x="670" y="622" width="1" height="11" fill="#000"/>
<rect x="688" y="378" width="1" height="5" fill="#000"/>
<rect x="688" y="622" width="1" height="5" fill="#000"/>
<g shape-rendering="auto" text-rendering="geometricPrecision" fill-opacity="0.9">
<text x="316.6" y="187" font-size="16.2" font-weight="normal" fill="#000" text-anchor="start" textLength="275.5" lengthAdjust="spacingAndGlyphs">RBSP-A/EMFISIS  HFR Spectra Data</text>
<text x="173.8" y="383.9" font-size="16.2" font-weight="normal" fill="#000" text-anchor="start" textLength="19.5" lengthAdjust="spacingAndGlyphs">10</text>
<text x="193.6" y="375.7" font-size="16.2" font-weight="normal" fill="#000" text-anchor="start" textLength="9.6" lengthAdjust="spacingAndGlyphs">4</text>
<text x="173.8" y="282.6" font-size="16.2" font-weight="normal" fill="#000" text-anchor="start" textLength="19.5" lengthAdjust="spacingAndGlyphs">10</text>
<text x="193.6" y="274.4" font-size="16.2" font-weight="normal" fill="#000" text-anchor="start" textLength="9.6" lengthAdjust="spacingAndGlyphs">5</text>
<text x="0" y="0" font-size="16.2" font-weight="normal" fill="#000" text-anchor="start" textLength="21.5" lengthAdjust="spacingAndGlyphs" transform="translate(161 297.4) rotate(-90)">Hz</text>
<text x="215.6" y="408.2" font-size="16.2" font-weight="normal" fill="#000" text-anchor="start" textLength="46.2" lengthAdjust="spacingAndGlyphs">00:00</text>
<text x="215.6" y="424.8" font-size="16.2" font-weight="normal" fill="#000" text-anchor="start" textLength="91.5" lengthAdjust="spacingAndGlyphs">2012-12-02</text>
<text x="647.6" y="408.2" font-size="16.2" font-weight="normal" fill="#000" text-anchor="start" textLength="46.2" lengthAdjust="spacingAndGlyphs">00:00</text>
<text x="647.6" y="424.8" font-size="16.2" font-weight="normal" fill="#000" text-anchor="start" textLength="91.5" lengthAdjust="spacingAndGlyphs">2012-12-03</text>
<text x="431.6" y="408.2" font-size="16.2" font-weight="normal" fill="#000" text-anchor="start" textLength="46.2" lengthAdjust="spacingAndGlyphs">12:00</text>
<text x="431.6" y="424.8" font-size="16.2" font-weight="normal" fill="#000" text-anchor="start" textLength="91.5" lengthAdjust="spacingAndGlyphs">2012-12-02</text>
<text x="295.2" y="413.8" font-size="16.2" font-weight="normal" fill="#000" text-anchor="start" textLength="315.5" lengthAdjust="spacingAndGlyphs">RBSP-A/ECT HOPE electron Tperp/Tpar</text>
</g>
<defs><linearGradient id="cb" x1="0" y1="0" x2="0" y2="1">
<stop offset="0.0000" stop-color="rgb(255,0,0)"/>
<stop offset="0.1333" stop-color="rgb(255,84,0)"/>
<stop offset="0.2471" stop-color="rgb(255,185,0)"/>
<stop offset="0.3647" stop-color="rgb(255,255,0)"/>
<stop offset="0.5059" stop-color="rgb(0,255,0)"/>
<stop offset="0.7529" stop-color="rgb(0,255,255)"/>
<stop offset="0.8824" stop-color="rgb(0,0,255)"/>
<stop offset="1.0000" stop-color="rgb(0,0,137)"/>
</linearGradient></defs>
<rect x="704" y="198" width="16" height="180" fill="url(#cb)"/>
<rect x="720" y="198" width="1" height="180" fill="#000"/>
<rect x="721" y="377" width="11" height="1" fill="#000"/>
<rect x="721" y="364" width="5" height="1" fill="#000"/>
<rect x="721" y="350" width="11" height="1" fill="#000"/>
<rect x="721" y="337" width="5" height="1" fill="#000"/>
<rect x="721" y="324" width="11" height="1" fill="#000"/>
<rect x="721" y="310" width="5" height="1" fill="#000"/>
<rect x="721" y="297" width="11" height="1" fill="#000"/>
<rect x="721" y="284" width="5" height="1" fill="#000"/>
<rect x="721" y="270" width="11" height="1" fill="#000"/>
<rect x="721" y="257" width="5" height="1" fill="#000"/>
<rect x="721" y="244" width="11" height="1" fill="#000"/>
<rect x="721" y="230" width="5" height="1" fill="#000"/>
<rect x="721" y="217" width="11" height="1" fill="#000"/>
<rect x="721" y="204" width="5" height="1" fill="#000"/>
<g shape-rendering="auto" text-rendering="geometricPrecision" fill-opacity="0.9">
<text x="736.8" y="386.6" font-size="16.2" font-weight="normal" fill="#000" text-anchor="start" textLength="19.5" lengthAdjust="spacingAndGlyphs">10</text>
<text x="756.8" y="379.4" font-size="16.2" font-weight="normal" fill="#000" text-anchor="start" textLength="25.4" lengthAdjust="spacingAndGlyphs">-22</text>
<text x="736.8" y="359.9" font-size="16.2" font-weight="normal" fill="#000" text-anchor="start" textLength="19.5" lengthAdjust="spacingAndGlyphs">10</text>
<text x="756.8" y="352.7" font-size="16.2" font-weight="normal" fill="#000" text-anchor="start" textLength="25.4" lengthAdjust="spacingAndGlyphs">-20</text>
<text x="736.8" y="333.2" font-size="16.2" font-weight="normal" fill="#000" text-anchor="start" textLength="19.5" lengthAdjust="spacingAndGlyphs">10</text>
<text x="756.8" y="326.0" font-size="16.2" font-weight="normal" fill="#000" text-anchor="start" textLength="25.4" lengthAdjust="spacingAndGlyphs">-18</text>
<text x="736.8" y="306.6" font-size="16.2" font-weight="normal" fill="#000" text-anchor="start" textLength="19.5" lengthAdjust="spacingAndGlyphs">10</text>
<text x="756.8" y="299.4" font-size="16.2" font-weight="normal" fill="#000" text-anchor="start" textLength="25.4" lengthAdjust="spacingAndGlyphs">-16</text>
<text x="736.8" y="279.9" font-size="16.2" font-weight="normal" fill="#000" text-anchor="start" textLength="19.5" lengthAdjust="spacingAndGlyphs">10</text>
<text x="756.8" y="272.7" font-size="16.2" font-weight="normal" fill="#000" text-anchor="start" textLength="25.4" lengthAdjust="spacingAndGlyphs">-14</text>
<text x="736.8" y="253.3" font-size="16.2" font-weight="normal" fill="#000" text-anchor="start" textLength="19.5" lengthAdjust="spacingAndGlyphs">10</text>
<text x="756.8" y="246.1" font-size="16.2" font-weight="normal" fill="#000" text-anchor="start" textLength="25.4" lengthAdjust="spacingAndGlyphs">-12</text>
<text x="736.8" y="226.6" font-size="16.2" font-weight="normal" fill="#000" text-anchor="start" textLength="19.5" lengthAdjust="spacingAndGlyphs">10</text>
<text x="756.8" y="219.4" font-size="16.2" font-weight="normal" fill="#000" text-anchor="start" textLength="25.4" lengthAdjust="spacingAndGlyphs">-10</text>
<text x="0" y="0" font-size="16.2" font-weight="normal" fill="#000" text-anchor="start" textLength="104.5" lengthAdjust="spacingAndGlyphs" transform="translate(804 340) rotate(-90)">V^2/m^2/Hz</text>
</g>
<rect x="219" y="440" width="470" height="1" fill="#000"/>
<rect x="214" y="621" width="475" height="1" fill="#000"/>
<rect x="219" y="440" width="1" height="182" fill="#000"/>
<rect x="688" y="440" width="1" height="187" fill="#000"/>
<rect x="214" y="621" width="5" height="1" fill="#000"/>
<rect x="208" y="599" width="11" height="1" fill="#000"/>
<rect x="214" y="580" width="5" height="1" fill="#000"/>
<rect x="208" y="562" width="11" height="1" fill="#000"/>
<rect x="214" y="545" width="5" height="1" fill="#000"/>
<rect x="208" y="529" width="11" height="1" fill="#000"/>
<rect x="214" y="514" width="5" height="1" fill="#000"/>
<rect x="208" y="500" width="11" height="1" fill="#000"/>
<rect x="214" y="487" width="5" height="1" fill="#000"/>
<rect x="208" y="475" width="11" height="1" fill="#000"/>
<rect x="214" y="463" width="5" height="1" fill="#000"/>
<rect x="208" y="451" width="11" height="1" fill="#000"/>
<rect x="214" y="440" width="5" height="1" fill="#000"/>
<g shape-rendering="auto" text-rendering="geometricPrecision" fill-opacity="0.9">
<text x="177.6" y="457.0" font-size="16.2" font-weight="normal" fill="#000" text-anchor="start" textLength="25.2" lengthAdjust="spacingAndGlyphs">2.2</text>
<text x="177.6" y="481.0" font-size="16.2" font-weight="normal" fill="#000" text-anchor="start" textLength="25.2" lengthAdjust="spacingAndGlyphs">2.0</text>
<text x="177.6" y="506.0" font-size="16.2" font-weight="normal" fill="#000" text-anchor="start" textLength="25.2" lengthAdjust="spacingAndGlyphs">1.8</text>
<text x="177.6" y="535.0" font-size="16.2" font-weight="normal" fill="#000" text-anchor="start" textLength="25.2" lengthAdjust="spacingAndGlyphs">1.6</text>
<text x="177.6" y="568.0" font-size="16.2" font-weight="normal" fill="#000" text-anchor="start" textLength="25.2" lengthAdjust="spacingAndGlyphs">1.4</text>
<text x="177.6" y="605.0" font-size="16.2" font-weight="normal" fill="#000" text-anchor="start" textLength="25.2" lengthAdjust="spacingAndGlyphs">1.2</text>
<text x="0" y="0" font-size="16.2" font-weight="normal" fill="#000" text-anchor="start" textLength="99" lengthAdjust="spacingAndGlyphs" transform="translate(166.4 581.3) rotate(-90)">e Tperp/Tpar</text>
<clipPath id="lpc"><rect x="220" y="441" width="468" height="180"/></clipPath><g clip-path="url(#lpc)" fill="none" stroke="#000" stroke-width="1.15" stroke-linejoin="bevel" shape-rendering="auto"><path d="M219.4 498.8 L219.6 523.5 L219.7 523.8 L219.9 541.0 L220.0 534.2 L220.1 526.9 L220.2 502.4 L220.3 496.5 L220.4 519.0 L220.6 520.1 L220.7 491.2 L220.9 508.5 L221.0 533.7 L221.1 509.1 L221.2 508.1 L221.4 512.8 L221.5 531.0 L221.6 502.0 L221.7 527.3 L221.9 506.1 L222.0 514.9 L222.1 515.6 L222.2 509.3 L222.3 508.2 L222.5 511.4 L222.6 524.2 L222.7 506.3 L222.9 511.0 L223.0 505.3 L223.2 519.1 L223.3 503.0 L223.5 507.5 L223.6 510.1 L223.7 505.6 L223.8 508.5 L224.0 494.8 L224.1 510.9 L224.2 486.9 L224.3 502.8 L224.5 514.4 L224.6 514.0 L224.7 499.6 L224.9 487.0 L225.0 484.5 L225.1 475.4 L225.3 485.7 L225.4 499.5 L225.5 492.9 L225.6 487.3 L225.7 489.3 L225.9 486.6 L226.0 469.9 L226.1 475.9 L226.3 468.7 L226.4 468.1 L226.6 505.7 L226.7 486.8 L226.9 471.5 L227.0 501.2 L227.2 473.6 L227.3 478.1 L227.4 471.4 L227.6 502.0 L227.7 482.8 L227.8 463.4 L228.0 494.4 L228.1 475.7 L228.2 483.1 L228.4 482.1 L228.5 483.2 L228.6 492.0 L228.8 474.3 L228.9 484.6 L229.1 490.0 L229.2 475.0 L229.3 478.0 L229.5 476.6 L229.6 462.8 L229.7 483.5 L229.8 489.4 L230.0 496.0 L230.1 480.1 L230.2 478.1 L230.4 462.3 L230.5 478.4 L230.6 480.3 L230.7 473.3 L230.8 472.4 L231.0 476.2 L231.1 468.5 L231.2 476.4 L231.3 472.5 L231.5 467.2 L231.6 468.5 L231.7 493.8 L231.8 472.2 L232.0 470.2 L232.1 485.3 L232.3 475.1 L232.4 474.3 L232.6 483.3 L232.7 497.7 L232.9 472.6 L233.0 499.5 L233.1 468.0 L233.2 477.2 L233.3 483.5 L233.5 477.5 L233.6 469.6 L233.7 481.5 L233.9 487.0 L234.0 482.1 L234.1 477.0 L234.3 475.9 L234.4 495.9 L234.5 469.1 L234.7 478.6 L234.8 481.0 L234.9 496.2 L235.0 481.6 L235.2 482.4 L235.3 481.0 L235.5 482.1 L235.6 496.6 L235.7 478.4 L235.9 487.0 L236.0 486.6 L236.1 485.1 L236.2 475.2 L236.4 508.3 L236.5 488.7 L236.6 495.9 L236.7 486.0 L236.9 490.0 L237.0 499.0 L237.1 484.3 L237.3 499.0 L237.4 489.8 L237.6 497.1 L237.7 491.7 L237.8 498.5 L237.9 488.5 L238.1 500.0 L238.2 495.3 L238.3 484.5 L238.5 494.5 L238.6 496.6 L238.7 496.4 L238.8 497.2 L239.0 500.0 L239.1 511.1 L239.2 502.5 L239.4 490.5 L239.5 496.2 L239.6 500.7 L239.7 505.0 L239.9 497.6 L240.0 499.3 L240.2 496.4 L240.3 496.9 L240.4 501.1 L240.6 515.9 L240.7 514.1 L240.9 497.2 L241.0 504.0 L241.1 501.1 L241.2 500.6 L241.4 500.2 L241.5 502.5 L241.6 500.7 L241.8 504.0 L241.9 498.5 L242.0 506.7 L242.1 513.8 L242.2 507.5 L242.4 521.3 L242.5 517.0 L242.6 508.1 L242.7 522.0 L242.9 513.1 L243.0 508.3 L243.1 509.0 L243.3 508.0 L243.4 515.1 L243.5 511.8 L243.6 513.5 L243.8 505.0 L243.9 521.8 L244.0 526.0 L244.2 520.9 L244.3 505.4 L244.4 514.8 L244.6 515.3 L244.7 516.3 L244.8 515.7 L244.9 518.2 L245.1 514.6 L245.2 516.8 L245.3 519.0 L245.5 516.4 L245.6 517.7 L245.8 523.7 L245.9 520.6 L246.1 517.7 L246.2 522.9 L246.3 521.8 L246.4 518.3 L246.6 521.5 L246.7 518.7 L246.8 527.1 L247.0 525.8 L247.1 525.2 L247.2 521.5 L247.4 527.0 L247.5 523.4 L247.7 532.5 L247.8 536.9 L247.9 533.9 L248.0 527.1 L248.1 525.6 L248.3 533.4 L248.4 532.2 L248.5 526.1 L248.6 537.1 L248.8 539.8 L248.9 526.3 L249.0 529.7 L249.2 536.3 L249.3 529.1 L249.4 535.4 L249.6 533.8 L249.7 526.9 L249.8 537.8 L250.0 529.9 L250.1 539.6 L250.2 531.3 L250.3 534.7 L250.5 535.3 L250.6 538.9 L250.8 540.7 L250.9 527.8 L251.0 534.3 L251.2 530.8 L251.3 536.7 L251.4 540.4 L251.6 532.2 L251.7 544.9 L251.9 536.9 L252.0 536.8 L252.2 540.5 L252.3 540.8 L252.4 549.0 L252.5 545.0 L252.7 548.6 L252.8 531.2 L252.9 535.4 L253.0 540.5 L253.1 547.5 L253.2 543.6 L253.4 547.0 L253.5 539.3 L253.6 549.8 L253.8 534.6 L253.9 540.6 L254.1 535.7 L254.2 540.0 L254.3 546.4 L254.5 542.0 L254.6 543.6 L254.7 544.9 L254.9 535.4 L255.0 535.7 L255.1 552.9 L255.3 545.2 L255.4 545.2 L255.5 544.6 L255.7 549.6 L255.8 545.4 L255.9 550.0 L256.0 546.9 L256.2 547.6 L256.3 553.9 L256.4 544.2 L256.6 556.5 L256.7 557.7 L256.8 547.7 L257.0 545.8 L257.1 551.6 L257.2 551.4 L257.4 552.1 L257.5 550.5 L257.6 558.7 L257.7 560.4 L257.8 554.5 L257.9 557.7 L258.1 558.7 L258.2 563.4 L258.3 555.2 L258.4 558.4 L258.6 560.5 L258.7 560.7 L258.8 554.4 L258.9 556.4 L259.1 564.3 L259.2 564.4 L259.3 561.7 L259.5 555.3 L259.6 560.7 L259.7 565.1 L259.9 558.4 L260.0 565.5 L260.2 560.0 L260.3 557.0 L260.4 558.1 L260.6 555.6 L260.7 567.8 L260.9 564.5 L261.0 565.0 L261.1 566.9 L261.2 551.5 L261.4 556.0 L261.5 566.1 L261.6 555.1 L261.8 557.3 L261.9 556.1 L262.1 555.3 L262.2 558.5 L262.3 557.8 L262.4 556.5 L262.6 557.8 L262.7 558.4 L262.8 558.4 L262.9 555.4 L263.1 560.3 L263.2 551.0 L263.4 560.8 L263.5 551.5 L263.6 556.1 L263.8 559.1 L263.9 560.9 L264.1 559.7 L264.2 553.2 L264.3 552.0 L264.4 559.4 L264.5 558.1 L264.7 563.0 L264.8 555.6 L265.0 553.1 L265.1 553.3 L265.2 553.7 L265.4 560.4 L265.5 560.5 L265.6 566.3 L265.7 557.1 L265.8 569.4 L266.0 563.6 L266.1 560.3 L266.3 563.7 L266.4 565.5 L266.5 561.3 L266.7 566.1 L266.8 571.3 L266.9 564.9 L267.1 562.7 L267.2 563.1 L267.3 558.5 L267.4 565.4 L267.5 563.8 L267.7 562.6 L267.8 569.6 L267.9 570.5 L268.0 561.7 L268.2 562.1 L268.3 567.3 L268.4 565.7 L268.5 571.8 L268.7 565.1 L268.8 570.1 L268.9 561.0 L269.1 567.6 L269.2 562.4 L269.3 565.3 L269.5 561.3 L269.6 567.4 L269.7 568.2 L269.8 566.4 L270.0 569.9 L270.1 563.7 L270.2 568.4 L270.4 569.5 L270.5 571.3 L270.6 571.6 L270.8 569.1 L270.9 575.6 L271.1 570.6 L271.2 565.8 L271.3 567.1 L271.4 564.7 L271.6 570.5 L271.7 571.3 L271.9 572.0 L272.0 570.0 L272.1 563.6 L272.2 568.9 L272.3 570.8 L272.4 569.1 L272.6 566.5 L272.7 569.3 L272.9 569.2 L273.0 571.6 L273.1 567.7 L273.3 574.0 L273.4 569.6 L273.5 569.7 L273.7 573.7 L273.8 569.2 L274.0 572.4 L274.1 575.0 L274.2 573.1 L274.3 576.1 L274.5 574.1 L274.6 571.2 L274.7 572.7 L274.8 573.5 L275.0 572.3 L275.1 570.4 L275.2 573.2 L275.3 567.8 L275.4 578.3 L275.6 575.8 L275.7 569.0 L275.8 573.7 L275.9 570.9 L276.0 575.3 L276.1 571.4 L276.2 567.6 L276.4 569.7 L276.5 574.2 L276.6 573.0 L276.8 573.8 L276.9 576.0 L277.1 573.2 L277.2 570.0 L277.3 567.4 L277.4 569.1 L277.5 576.3 L277.7 574.7 L277.8 577.4 L277.9 575.6 L278.1 577.2 L278.2 574.4 L278.3 571.7 L278.4 581.5 L278.5 576.9 L278.7 573.2 L278.8 577.7 L278.9 574.6 L279.1 580.2 L279.2 571.6 L279.4 577.9 L279.5 571.0 L279.7 575.8 L279.8 574.5 L279.9 573.1 L280.0 575.7 L280.1 573.3 L280.3 578.5 L280.4 573.8 L280.5 569.3 L280.7 572.7 L280.8 570.2 L280.9 581.4 L281.1 582.1 L281.2 573.6 L281.3 573.3 L281.5 577.8 L281.6 574.5 L281.7 579.8 L281.8 582.9 L281.9 579.1 L282.0 579.3 L282.1 581.8 L282.3 575.8 L282.4 571.0 L282.5 571.1 L282.7 579.5 L282.8 572.0 L282.9 566.2 L283.1 571.4 L283.2 570.1 L283.3 574.2 L283.4 571.6 L283.6 580.2 L283.7 565.8 L283.8 570.4 L283.9 577.8 L284.0 567.7 L284.1 570.8 L284.3 571.3 L284.4 576.0 L284.6 570.9 L284.7 568.3 L284.8 575.6 L284.9 572.0 L285.0 571.3 L285.1 572.6 L285.2 569.8 L285.3 575.8 L285.5 575.8 L285.6 574.8 L285.8 569.6 L285.9 574.2 L286.0 570.3 L286.2 568.5 L286.3 565.8 L286.4 577.2 L286.6 573.4 L286.7 573.1 L286.8 574.4 L286.9 572.0 L287.1 573.2 L287.2 565.3 L287.4 573.2 L287.5 571.4 L287.6 572.3 L287.7 571.3 L287.9 567.9 L288.0 566.1 L288.1 577.5 L288.2 570.7 L288.3 572.7 L288.4 564.6 L288.6 568.6 L288.7 576.8 L288.8 565.2 L289.0 571.6 L289.1 580.1 L289.3 580.1 L289.4 573.2 L289.5 571.4 L289.6 575.0 L289.8 576.7 L289.9 571.4 L290.0 570.6 L290.2 564.0 L290.3 571.8 L290.4 569.6 L290.6 568.0 L290.7 570.2 L290.8 570.9 L291.0 573.0 L291.1 569.8 L291.2 569.7 L291.4 563.3 L291.5 568.0 L291.7 571.1 L291.8 572.6 L291.9 566.9 L292.1 571.3 L292.2 579.5 L292.3 569.8 L292.5 578.0 L292.6 572.2 L292.7 579.9 L292.9 572.6 L293.0 567.9 L293.1 580.6 L293.2 566.2 L293.4 563.2 L293.5 565.5 L293.7 575.8 L293.8 566.0 L293.9 568.2 L294.0 573.1 L294.2 570.3 L294.3 573.3 L294.4 575.0 L294.5 566.9 L294.7 568.3 L294.8 565.2 L294.9 562.9 L295.1 572.9 L295.2 565.7 L295.3 575.5 L295.5 567.8 L295.6 579.2 L295.7 569.7 L295.9 565.2 L296.0 562.1 L296.1 574.7 L296.2 568.0 L296.3 571.2 L296.5 574.2 L296.6 560.5 L296.7 573.6 L296.9 571.4 L297.0 580.0 L297.1 561.0 L297.3 563.1 L297.4 567.6 L297.6 572.5 L297.7 564.8 L297.9 571.6 L298.0 567.1 L298.2 565.1 L298.3 569.9 L298.4 568.1 L298.5 572.0 L298.7 559.9 L298.8 550.7 L299.0 578.6 L299.1 557.4 L299.2 572.8 L299.3 578.3 L299.5 563.8 L299.6 563.9 L299.7 559.3 L299.8 562.4 L300.0 563.3 L300.1 558.5 L300.2 553.7 L300.4 567.1 L300.5 569.3 L300.6 572.9 L300.7 563.4 L300.9 559.6 L301.1 574.1 L301.2 562.5 L301.3 553.9 L301.5 564.9 L301.6 544.2 L301.7 555.6 L301.8 551.1 L302.0 561.2 L302.1 571.4 L302.2 558.9 L302.3 554.9 L302.5 557.5 L302.6 554.0 L302.7 547.3 L302.8 542.6 L302.9 545.8 L303.1 548.0 L303.2 549.1 L303.3 556.9 L303.5 555.0 L303.6 558.4 L303.7 545.3 L303.9 556.6 L304.0 549.0 L304.2 566.4 L304.3 556.7 L304.5 551.6 L304.6 551.0 L304.7 551.1 L304.9 545.2 L305.0 551.9 L305.1 544.3 L305.2 553.7 L305.3 556.1 L305.5 542.4 L305.6 542.7 L305.7 538.7 L305.9 543.7 L306.0 556.5 L306.1 556.5 L306.2 543.1 L306.4 539.0 L306.5 556.8 L306.7 555.6 L306.8 553.1 L306.9 555.3 L307.0 554.1 L307.2 547.5 L307.3 550.8 L307.4 548.7 L307.6 561.8 L307.7 556.7 L307.8 541.5 L308.0 547.7 L308.1 553.1 L308.2 548.3 L308.4 546.9 L308.5 550.1 L308.6 553.5 L308.7 550.4 L308.9 550.4 L309.0 550.7 L309.2 550.5 L309.3 547.8 L309.4 551.8 L309.6 548.5 L309.7 551.5 L309.8 556.5 L309.9 551.9 L310.0 559.2 L310.2 548.9 L310.3 550.3 L310.5 556.1 L310.6 551.7 L310.8 556.6 L310.9 562.1 L311.0 552.7 L311.2 553.8 L311.4 556.6 L311.5 556.2 L311.6 562.3 L311.7 557.7 L311.8 564.6 L311.9 559.3 L312.1 556.1 L312.2 557.8 L312.3 554.6 L312.4 557.9 L312.5 551.4 L312.7 558.4 L312.8 553.8 L312.9 564.6 L313.1 568.9 L313.2 549.1 L313.4 553.1 L313.5 554.1 L313.6 561.5 L313.8 560.5 L313.9 563.6 L314.0 553.5 L314.2 562.1 L314.3 560.0 L314.4 555.3 L314.6 564.1 L314.7 555.0 L314.9 558.6 L315.0 560.6 L315.1 561.8 L315.3 559.1 L315.4 566.9 L315.5 559.2 L315.7 561.2 L315.8 560.2 L315.9 549.4 L316.1 544.9 L316.2 565.2 L316.3 551.9 L316.5 556.0 L316.6 549.9 L316.8 556.7 L316.9 560.8 L317.0 552.9 L317.1 556.2 L317.3 566.7 L317.5 559.3 L317.6 561.2 L317.7 561.0 L317.8 545.7 L317.9 548.1 L318.1 567.7 L318.2 549.1 L318.3 556.0 L318.4 551.7 L318.5 543.6 L318.6 546.8 L318.8 562.6 L318.9 545.0 L319.0 546.7 L319.2 553.3 L319.3 541.8 L319.4 548.0 L319.5 540.0 L319.7 545.7 L319.8 546.0 L320.0 536.2 L320.1 545.1 L320.2 537.8 L320.3 537.4 L320.5 549.0 L320.6 534.7 L320.7 545.0 L320.9 536.9 L321.0 525.5 L321.1 537.7 L321.2 535.0 L321.3 534.4 L321.5 532.8 L321.6 545.9 L321.7 546.6 L321.9 536.9 L322.0 544.5 L322.1 541.1 L322.3 532.9 L322.4 536.5 L322.5 534.3 L322.6 549.0 L322.8 525.6 L323.0 533.2 L323.1 533.7 L323.2 536.0 L323.4 525.4 L323.5 518.3 L323.6 531.1 L323.8 517.9 L323.9 520.6 L324.1 536.8 L324.2 540.8 L324.4 529.1 L324.5 528.8 L324.7 533.8 L324.8 523.6 L324.9 521.4 L325.1 511.4 L325.2 516.8 L325.3 526.8 L325.4 523.3 L325.6 520.0 L325.7 515.4 L325.8 516.4 L326.0 508.6 L326.1 529.4 L326.2 518.5 L326.4 507.2 L326.5 519.4 L326.6 519.9 L326.8 514.5 L326.9 521.0 L327.0 519.5 L327.2 512.0 L327.3 520.9 L327.4 507.2 L327.5 520.7 L327.7 520.3 L327.8 512.7 L328.0 516.1 L328.1 513.0 L328.2 514.5 L328.4 508.3 L328.5 511.8 L328.7 516.7 L328.8 519.9 L328.9 519.5 L329.0 502.4 L329.2 509.0 L329.3 527.1 L329.4 518.4 L329.5 521.1 L329.6 518.3 L329.8 502.6 L329.9 516.4 L330.0 517.1 L330.2 525.4 L330.3 513.3 L330.4 524.4 L330.6 504.4 L330.7 514.2 L330.8 500.4 L331.0 513.5 L331.1 521.5 L331.3 507.0 L331.4 504.5 L331.5 485.4 L331.7 508.2 L331.8 516.4 L332.0 511.1 L332.1 504.3 L332.2 480.5 L332.3 516.3 L332.5 506.8 L332.6 481.2 L332.8 499.2 L332.9 484.0 L333.0 501.8 L333.1 496.6 L333.3 493.8 L333.4 504.8 L333.6 502.9 L333.7 482.7 L333.8 482.2 L334.0 482.9 L334.1 467.6 L334.3 499.1 L334.4 490.9 L334.5 476.9 L334.6 474.4 L334.7 493.5 L334.9 483.5 L335.0 488.3 L335.2 480.8 L335.3 491.8 L335.4 483.9 L335.5 494.1 L335.6 471.1 L335.8 480.1 L335.9 485.2 L336.1 477.3 L336.2 472.1 L336.4 487.3 L336.5 483.4 L336.6 487.8 L336.8 481.7 L336.9 498.7 L337.1 499.1 L337.2 495.8 L337.3 467.0 L337.4 502.2 L337.6 498.1 L337.7 485.4 L337.8 479.4 L337.9 493.7 L338.1 484.2 L338.2 492.2 L338.3 484.0 L338.4 489.3 L338.6 496.9 L338.7 475.9 L338.8 478.3 L338.9 490.6 L339.1 490.9 L339.2 470.1 L339.3 490.7 L339.4 476.3 L339.5 483.0 L339.7 477.2 L339.8 508.1 L340.0 472.8 L340.1 502.0 L340.2 489.6 L340.3 495.4 L340.4 491.8 L340.5 489.6 L340.7 489.2 L340.8 483.0 L341.0 486.1 L341.1 494.3 L341.2 502.1 L341.4 498.5 L341.5 493.0 L341.6 480.0 L341.7 509.7 L341.9 496.8 L342.0 471.3 L342.1 497.9 L342.2 494.8 L342.4 486.3 L342.5 496.1 L342.6 491.7 L342.7 487.7 L342.9 487.4 L343.0 482.6 L343.1 510.2 L343.2 481.4 L343.4 497.6 L343.5 476.1 L343.6 484.6 L343.8 477.7 L343.9 491.7 L344.0 490.3 L344.1 470.5 L344.2 477.1 L344.4 482.7 L344.5 483.9 L344.7 496.4 L344.8 491.0 L345.0 491.6 L345.1 471.6 L345.2 491.3 L345.4 489.6 L345.5 496.6 L345.6 465.9 L345.7 489.6 L345.8 492.4 L345.9 476.4 L346.1 484.4 L346.2 483.5 L346.3 487.1 L346.4 497.8 L346.5 477.0 L346.6 473.8 L346.8 498.3 L346.9 485.5 L347.0 496.2 L347.2 492.3 L347.3 506.2 L347.5 488.1 L347.6 469.6 L347.8 471.8 L347.9 481.2 L348.1 496.9 L348.2 498.6 L348.3 486.3 L348.4 486.4 L348.6 507.6 L348.7 472.7 L348.8 495.2 L348.9 483.0 L349.0 499.1 L349.2 491.9 L349.3 490.5 L349.4 485.9 L349.6 485.5 L349.7 494.6 L349.8 489.9 L350.0 487.7 L350.1 492.7 L350.2 493.4 L350.4 478.0 L350.5 478.3 L350.6 497.8 L350.8 484.2 L350.9 493.4 L351.0 493.6 L351.1 491.7 L351.2 495.4 L351.3 491.2 L351.5 487.1 L351.6 489.3 L351.8 483.0 L351.9 507.6 L352.0 500.0 L352.2 503.6 L352.3 501.6 L352.4 498.3 L352.6 509.0 L352.7 493.2 L352.9 501.5 L353.0 498.3 L353.1 502.8 L353.2 490.8 L353.3 493.4 L353.5 501.4 L353.6 502.6 L353.7 520.1 L353.9 493.9 L354.0 500.2 L354.1 501.0 L354.2 504.9 L354.4 505.1 L354.5 505.0 L354.7 507.7 L354.8 512.4 L355.0 519.8 L355.1 501.7 L355.2 527.9 L355.4 516.7 L355.5 519.2 L355.7 507.9 L355.8 516.3 L355.9 506.2 L356.0 491.8 L356.2 517.4 L356.3 502.0 L356.4 534.0 L356.5 510.5 L356.7 514.8 L356.8 499.2 L357.0 506.0 L357.1 521.9 L357.2 525.6 L357.4 498.6 L357.5 515.6 L357.7 526.6 L357.8 514.6 L357.9 523.3 L358.0 520.3 L358.2 539.8 L358.3 526.4 L358.4 533.1 L358.5 516.3 L358.6 510.1 L358.7 535.3 L358.9 519.8 L359.0 541.1 L359.1 535.3 L359.3 550.8 L359.4 526.8 L359.6 546.9 L359.7 549.0 L359.8 565.1 L360.0 542.9 L360.1 556.2 L360.2 557.7 L360.4 561.7"/><path d="M373.0 538.5 L373.1 547.3 L373.3 544.3 L373.4 536.8 L373.5 536.4 L373.7 541.4 L373.8 531.5 L373.9 529.4 L374.0 516.1 L374.2 517.4 L374.3 521.5 L374.4 500.4 L374.5 512.0 L374.7 519.4 L374.8 521.7 L374.9 516.4 L375.0 503.1 L375.2 516.8 L375.3 495.4 L375.4 495.0 L375.6 482.6 L375.7 482.3 L375.8 494.5 L375.9 497.4 L376.0 492.0 L376.1 506.1 L376.3 481.8 L376.4 494.6 L376.5 496.0 L376.6 502.3 L376.8 488.7 L376.9 490.4 L377.0 495.0 L377.1 482.7 L377.3 496.2 L377.4 472.8 L377.5 477.0 L377.6 490.4 L377.8 485.2 L377.9 494.4 L378.0 506.5 L378.1 486.8 L378.3 497.7 L378.4 489.3 L378.5 506.4 L378.6 479.6 L378.7 494.1 L378.8 484.7 L379.0 481.2 L379.1 483.9 L379.2 494.6 L379.3 493.5 L379.4 476.7 L379.5 489.8 L379.6 476.4 L379.8 491.7 L379.9 471.1 L380.0 476.0 L380.2 485.4 L380.3 488.3 L380.4 469.5 L380.6 472.7 L380.7 503.3 L380.8 474.0 L381.0 491.5 L381.1 487.9 L381.2 469.4 L381.4 489.9 L381.5 483.9 L381.6 488.0 L381.8 496.6 L381.9 486.2 L382.0 502.2 L382.2 477.5 L382.3 493.7 L382.5 489.6 L382.6 494.2 L382.7 501.1 L382.8 486.8 L383.0 488.0 L383.1 483.7 L383.2 485.4 L383.4 489.1 L383.5 484.6 L383.6 467.1 L383.8 477.9 L383.9 495.1 L384.1 501.9 L384.2 477.9 L384.4 480.4 L384.5 482.4 L384.6 496.7 L384.8 489.1 L384.9 476.7 L385.0 469.6 L385.1 494.6 L385.2 473.2 L385.4 472.1 L385.5 470.4 L385.6 483.1 L385.7 487.8 L385.9 498.5 L386.0 482.9 L386.1 477.9 L386.2 482.5 L386.4 471.7 L386.5 465.4 L386.7 475.9 L386.8 477.6 L387.0 476.2 L387.1 477.2 L387.3 485.5 L387.4 461.0 L387.5 483.9 L387.7 476.4 L387.8 474.0 L387.9 467.0 L388.0 458.2 L388.2 483.6 L388.3 477.0 L388.5 479.1 L388.6 469.5 L388.7 477.4 L388.8 485.7 L389.0 462.2 L389.1 485.1 L389.3 482.4 L389.4 488.1 L389.5 492.2 L389.7 472.9 L389.8 480.8 L390.0 481.6 L390.1 489.6 L390.2 504.4 L390.4 463.8 L390.5 505.8 L390.7 491.1 L390.8 478.6 L390.9 462.3 L391.1 490.4 L391.2 473.6 L391.3 463.5 L391.4 482.3 L391.5 478.1 L391.6 505.1 L391.8 483.1 L391.9 512.0 L392.0 512.5 L392.2 490.9 L392.3 493.1 L392.4 495.0 L392.5 493.1 L392.6 501.0 L392.8 473.2 L392.9 513.3 L393.0 507.0 L393.1 493.0 L393.2 480.5 L393.3 467.5 L393.5 511.7 L393.6 472.6 L393.8 503.7 L393.9 488.8 L394.0 478.4 L394.2 489.6 L394.3 477.9 L394.4 480.4 L394.6 481.0 L394.7 493.0 L394.8 472.2 L394.9 452.0 L395.0 472.0 L395.2 494.4 L395.3 500.1 L395.4 499.0 L395.6 488.5 L395.7 504.4 L395.8 498.5 L395.9 500.5 L396.1 483.8 L396.2 484.6 L396.4 486.4 L396.5 494.2 L396.7 470.3 L396.8 459.0 L397.0 482.4 L397.1 471.5 L397.2 488.3 L397.3 478.4 L397.5 496.6 L397.6 456.3 L397.8 490.3 L397.9 471.1 L398.0 487.7 L398.2 483.6 L398.3 475.5 L398.4 480.3 L398.5 472.2 L398.6 480.4 L398.8 485.6 L398.9 467.5 L399.0 486.7 L399.1 460.5 L399.3 463.6 L399.4 488.4 L399.5 472.7 L399.6 478.8 L399.7 496.6 L399.8 487.7 L399.9 483.5 L400.1 493.6 L400.2 479.8 L400.4 495.4 L400.5 471.5 L400.6 497.8 L400.8 485.7 L400.9 486.7 L401.0 491.8 L401.2 493.6 L401.3 494.5 L401.5 467.9 L401.6 481.1 L401.7 491.0 L401.9 483.1 L402.0 479.9 L402.1 476.9 L402.3 483.5 L402.4 476.8 L402.5 485.3 L402.7 485.1 L402.8 497.0 L403.0 493.1 L403.1 491.8 L403.2 485.4 L403.3 489.4 L403.4 486.2 L403.6 487.3 L403.7 477.4 L403.9 482.7 L404.0 486.9 L404.1 497.0 L404.3 499.9 L404.4 490.9 L404.5 501.0 L404.7 492.6 L404.8 491.1 L404.9 484.1 L405.0 500.3 L405.2 497.1 L405.3 495.6 L405.4 498.6 L405.5 490.2 L405.7 484.8 L405.8 505.4 L406.0 490.9 L406.1 493.4 L406.2 500.5 L406.4 483.4 L406.5 491.5 L406.7 486.5 L406.8 485.2 L407.0 485.5 L407.1 490.2 L407.2 486.3 L407.3 487.0 L407.5 490.8 L407.6 502.7 L407.7 481.1 L407.9 492.3 L408.0 482.7 L408.2 490.0 L408.3 501.2 L408.5 481.0 L408.6 490.2 L408.7 481.5 L408.8 492.6 L408.9 485.4 L409.1 493.8 L409.2 482.7 L409.3 484.4 L409.4 490.2 L409.6 486.2 L409.7 490.9 L409.8 484.0 L409.9 488.0 L410.1 475.6 L410.2 479.0 L410.3 477.1 L410.5 483.8 L410.6 491.1 L410.7 488.3 L410.8 490.1 L410.9 491.9 L411.1 480.9 L411.2 473.1 L411.3 489.1 L411.4 489.0 L411.6 473.0 L411.7 487.6 L411.8 480.0 L412.0 483.9 L412.1 475.9 L412.3 479.4 L412.4 477.1 L412.5 480.3 L412.6 475.1 L412.7 476.7 L412.9 486.0 L413.0 484.9 L413.1 480.5 L413.2 477.4 L413.3 493.7 L413.5 485.2 L413.6 480.7 L413.7 480.4 L413.9 482.8 L414.0 478.4 L414.1 484.0 L414.3 485.4 L414.4 478.8 L414.5 478.3 L414.7 494.7 L414.8 472.8 L414.9 484.4 L415.0 487.1 L415.2 479.7 L415.3 480.6 L415.5 482.1 L415.6 488.4 L415.7 484.9 L415.9 473.5 L416.0 480.6 L416.1 479.3 L416.3 482.5 L416.4 483.6 L416.5 494.8 L416.6 473.3 L416.8 487.2 L416.9 485.1 L417.1 488.8 L417.2 489.4 L417.3 482.1 L417.4 495.9 L417.6 477.6 L417.7 480.9 L417.9 487.9 L418.0 483.6 L418.2 485.6 L418.3 485.1 L418.4 479.9 L418.6 479.9 L418.7 483.2 L418.8 497.8 L418.9 479.2 L419.1 486.1 L419.2 485.0 L419.3 498.3 L419.5 486.0 L419.6 484.4 L419.7 484.8 L419.9 495.4 L420.0 482.4 L420.2 494.0 L420.3 493.8 L420.4 478.5 L420.5 485.0 L420.6 491.7 L420.7 483.3 L420.9 491.7 L421.0 490.1 L421.2 497.2 L421.3 485.7 L421.4 501.4 L421.5 493.4 L421.7 491.1 L421.8 490.4 L421.9 490.7 L422.1 491.9 L422.2 495.8 L422.3 502.6 L422.4 498.3 L422.5 495.0 L422.6 482.9 L422.8 482.9 L422.9 500.0 L423.0 503.5 L423.2 499.1 L423.3 488.8 L423.5 490.0 L423.6 501.4 L423.8 494.4 L423.9 494.6 L424.0 483.2 L424.1 504.8 L424.2 496.7 L424.4 492.9 L424.5 492.0 L424.6 490.4 L424.8 501.2 L424.9 498.8 L425.0 496.7 L425.2 489.4 L425.3 490.9 L425.5 496.5 L425.6 495.5 L425.7 501.2 L425.8 492.4 L426.0 492.7 L426.1 493.3 L426.2 500.8 L426.3 491.2 L426.5 503.0 L426.6 508.9 L426.7 496.3 L426.8 500.3 L427.0 496.2 L427.1 509.1 L427.2 487.8 L427.4 500.0 L427.5 495.6 L427.6 489.0 L427.8 487.2 L427.9 491.0 L428.0 502.4 L428.2 498.0 L428.3 503.0 L428.4 488.6 L428.5 499.8 L428.6 502.5 L428.7 498.7 L428.9 494.4 L429.0 496.9 L429.2 498.4 L429.3 488.8 L429.4 499.7 L429.6 490.0 L429.7 494.1 L429.9 509.6 L430.0 502.3 L430.2 500.8 L430.3 497.5 L430.4 495.2 L430.5 515.1 L430.7 500.6 L430.8 490.6 L430.9 497.3 L431.0 512.5 L431.1 509.3 L431.2 503.1 L431.4 495.6 L431.5 499.3 L431.6 493.5 L431.7 496.3 L431.9 503.1 L432.0 509.6 L432.2 513.2 L432.3 500.7 L432.4 503.1 L432.5 504.8 L432.7 497.8 L432.8 501.0 L432.9 502.9 L433.1 504.1 L433.2 506.1 L433.3 502.7 L433.5 495.6 L433.6 515.3 L433.7 515.3 L433.8 499.1 L434.0 505.0 L434.1 495.5 L434.2 498.7 L434.3 504.8 L434.4 514.0 L434.5 510.9 L434.7 500.1 L434.8 504.5 L434.9 507.5 L435.1 504.5 L435.2 500.5 L435.3 501.7 L435.4 497.8 L435.5 500.7 L435.6 505.4 L435.8 496.8 L435.9 505.7 L436.0 500.2 L436.1 504.0 L436.3 506.3 L436.4 496.8 L436.5 500.7 L436.7 505.9 L436.8 500.4 L436.9 499.6 L437.1 500.9 L437.2 514.2 L437.3 509.8 L437.4 509.2 L437.6 503.2 L437.7 509.5 L437.8 503.1 L437.9 491.8 L438.1 501.7 L438.2 501.1 L438.3 491.1 L438.5 500.9 L438.6 508.6 L438.8 497.3 L438.9 491.8 L439.0 493.9 L439.2 498.6 L439.3 497.5 L439.4 511.2 L439.5 494.4 L439.6 508.0 L439.8 510.1 L439.9 507.6 L440.1 516.9 L440.2 502.1 L440.4 505.9 L440.5 503.3 L440.6 504.8 L440.8 511.9 L440.9 506.5 L441.0 502.4 L441.2 502.1 L441.3 509.5 L441.4 496.2 L441.6 495.9 L441.7 505.5 L441.8 507.7 L441.9 493.9 L442.0 491.8 L442.2 489.7 L442.3 499.0 L442.5 497.3 L442.6 514.8 L442.7 505.0 L442.8 499.9 L443.0 499.8 L443.1 499.3 L443.2 506.4 L443.3 504.6 L443.4 492.5 L443.6 489.1 L443.7 494.2 L443.9 512.2 L444.0 511.3 L444.2 507.5 L444.3 501.1 L444.4 502.1 L444.5 512.9 L444.6 505.4 L444.7 498.4 L444.9 499.9 L445.0 505.8 L445.1 497.4 L445.2 500.3 L445.4 503.2 L445.5 491.2 L445.7 499.3 L445.8 493.5 L445.9 498.5 L446.0 501.7 L446.1 497.6 L446.3 498.9 L446.4 494.1 L446.6 509.2 L446.7 487.0 L446.8 508.1 L446.9 496.2 L447.1 508.1 L447.2 508.8 L447.3 508.1 L447.4 497.0 L447.6 493.2 L447.7 495.3 L447.9 511.2 L448.0 498.5 L448.1 503.3 L448.3 512.7 L448.4 504.2 L448.5 497.2 L448.6 510.2 L448.8 494.1 L448.9 498.0 L449.0 500.5 L449.2 496.7 L449.3 498.7 L449.4 489.1 L449.5 502.2 L449.7 489.5 L449.8 512.9 L450.0 495.6 L450.1 497.2 L450.3 505.3 L450.4 498.3 L450.5 496.4 L450.7 514.8 L450.8 499.1 L451.0 498.1 L451.1 499.3 L451.2 508.6 L451.4 492.0 L451.5 507.1 L451.7 502.1 L451.8 511.4 L452.0 514.3 L452.1 502.2 L452.2 514.5 L452.3 515.5 L452.4 495.7 L452.6 515.1 L452.7 498.8 L452.8 494.1 L453.0 505.2 L453.1 501.8 L453.2 494.6 L453.3 510.5 L453.5 498.3 L453.6 493.3 L453.7 489.0 L453.8 494.0 L453.9 500.6 L454.1 512.8 L454.2 506.9 L454.3 490.7 L454.5 485.6 L454.6 511.0 L454.7 503.2 L454.9 501.3 L455.0 497.9 L455.1 497.5 L455.3 486.0 L455.4 499.9 L455.5 495.9 L455.6 487.8 L455.8 492.5 L455.9 500.1 L456.0 490.5 L456.1 490.1 L456.3 497.5 L456.4 495.6 L456.6 492.7 L456.7 487.7 L456.8 495.0 L456.9 494.1 L457.0 504.7 L457.2 503.7 L457.3 491.3 L457.4 489.0 L457.6 493.4 L457.7 483.9 L457.9 490.3 L458.0 475.6 L458.2 487.5 L458.3 488.2 L458.5 501.3 L458.6 483.6 L458.7 496.8 L458.8 485.5 L458.9 491.2 L459.1 500.9 L459.2 487.8 L459.3 498.0 L459.5 477.6 L459.6 488.1 L459.7 495.2 L459.9 487.0 L460.0 499.1 L460.1 480.7 L460.2 500.7 L460.4 506.3 L460.5 488.6 L460.6 482.7 L460.7 496.0 L460.8 486.8 L460.9 489.4 L461.1 479.1 L461.2 498.1 L461.3 486.3 L461.4 495.3 L461.5 493.0 L461.7 499.0 L461.8 491.7 L461.9 504.7 L462.1 501.1 L462.2 491.0 L462.3 504.2 L462.4 496.8 L462.6 515.1 L462.7 492.7 L462.9 510.7 L463.0 497.5 L463.2 493.0 L463.3 502.7 L463.4 497.6 L463.6 488.2 L463.7 508.8 L463.8 500.6 L463.9 505.0 L464.1 498.9 L464.2 502.1 L464.4 496.6 L464.5 503.8 L464.6 503.4 L464.8 514.5 L464.9 494.1 L465.1 499.7 L465.2 500.7 L465.3 502.9 L465.4 500.3 L465.6 507.6 L465.7 501.0 L465.9 509.9 L466.0 508.0 L466.2 511.1 L466.3 502.5 L466.4 503.7 L466.6 495.2 L466.7 503.0 L466.8 522.0 L467.0 502.4 L467.1 508.8 L467.2 502.2 L467.4 516.2 L467.5 504.0 L467.6 503.4 L467.7 508.3 L467.9 506.9 L468.0 519.0 L468.1 503.1 L468.3 514.1 L468.4 510.9 L468.5 507.1 L468.7 506.7 L468.8 513.7 L468.9 501.1 L469.1 502.3 L469.2 506.6 L469.3 508.5 L469.4 518.2 L469.6 510.5 L469.7 512.2 L469.8 524.8 L470.0 504.7 L470.1 521.2 L470.3 523.6 L470.4 518.5 L470.6 520.6 L470.7 516.7 L470.8 509.0 L470.9 522.7 L471.0 518.8 L471.2 523.5 L471.3 522.5 L471.4 531.4 L471.5 516.6 L471.7 528.6 L471.8 508.0 L471.9 513.0 L472.1 517.9 L472.2 516.7 L472.3 512.4 L472.5 508.0 L472.6 519.1 L472.8 500.1 L472.9 523.3 L473.0 501.2 L473.1 503.4 L473.2 509.6 L473.3 510.3 L473.4 498.6 L473.6 501.5 L473.7 514.0 L473.8 508.2 L473.9 508.8 L474.1 492.2 L474.2 524.5 L474.3 506.9 L474.4 494.8 L474.6 498.3 L474.7 502.2 L474.8 501.9 L474.9 495.7 L475.0 501.4 L475.2 510.6 L475.3 494.8 L475.4 487.6 L475.6 493.5 L475.7 498.9 L475.8 501.1 L476.0 492.1 L476.1 493.8 L476.2 519.5 L476.3 494.9 L476.4 496.2 L476.6 508.5 L476.7 493.2 L476.8 492.1 L476.9 497.8 L477.1 513.9 L477.2 507.1 L477.3 497.0 L477.5 506.2 L477.6 504.0 L477.7 498.5 L477.9 494.8 L478.0 493.5 L478.1 503.1 L478.2 493.9 L478.4 511.9 L478.5 485.0 L478.6 484.8 L478.8 495.1 L478.9 496.7 L479.0 498.0 L479.2 497.1 L479.3 489.8 L479.5 498.0 L479.6 492.5 L479.7 491.9 L479.9 495.1 L480.0 515.2 L480.1 499.4 L480.3 496.5 L480.4 515.8 L480.5 497.5 L480.7 494.6 L480.8 494.6 L480.9 493.3 L481.1 503.6 L481.2 508.5 L481.3 497.3 L481.5 497.7 L481.6 495.1 L481.7 492.4 L481.8 489.8 L482.0 491.9 L482.1 494.7 L482.2 492.9 L482.3 510.1 L482.4 501.4 L482.6 518.6 L482.7 507.8 L482.8 491.4 L483.0 497.6 L483.1 509.7 L483.2 503.2 L483.3 489.4 L483.5 515.9 L483.6 510.3 L483.7 497.5 L483.9 511.9 L484.0 508.6 L484.1 509.6 L484.3 508.2 L484.4 508.5 L484.5 494.7 L484.7 513.7 L484.8 504.7 L485.0 510.5 L485.1 524.7 L485.2 500.2 L485.4 528.7 L485.5 523.7 L485.7 513.1 L485.8 501.9 L485.9 542.5 L486.0 509.6 L486.1 516.5 L486.3 518.8 L486.4 528.6 L486.6 516.8 L486.7 532.5 L486.9 520.4 L487.0 518.5 L487.1 542.3 L487.3 528.2 L487.4 520.8 L487.5 525.3 L487.7 530.8 L487.8 521.2 L487.9 523.7 L488.0 522.6 L488.1 501.3 L488.3 530.5 L488.4 530.2 L488.5 539.5 L488.7 509.8 L488.8 546.7 L489.0 498.8 L489.1 527.8 L489.2 508.3 L489.4 515.9 L489.5 498.3 L489.7 518.4 L489.8 515.3 L490.0 515.3 L490.1 502.9 L490.2 527.0 L490.3 519.6 L490.4 529.6 L490.6 531.3 L490.7 510.2 L490.9 509.0 L491.0 505.9 L491.1 539.3 L491.3 522.1 L491.4 518.9 L491.5 531.0 L491.6 524.9 L491.8 517.9 L491.9 522.4 L492.0 506.7 L492.1 527.6 L492.3 519.1 L492.4 500.6 L492.6 515.2 L492.7 532.8 L492.9 508.7 L493.0 525.1 L493.1 501.8 L493.2 518.4 L493.4 508.1 L493.5 493.6 L493.6 503.6 L493.7 511.0 L493.8 530.8 L494.0 513.5 L494.1 517.2 L494.2 507.9 L494.3 512.7 L494.4 506.6 L494.5 489.1 L494.7 501.0 L494.8 503.9 L494.9 510.5 L495.1 510.4 L495.2 495.3 L495.3 525.8 L495.5 498.7 L495.6 502.0 L495.7 520.4 L495.9 510.2 L496.0 514.2 L496.1 483.4 L496.3 505.2 L496.4 502.1 L496.5 521.9 L496.6 509.6 L496.8 488.1 L496.9 495.3 L497.0 504.3 L497.2 482.8 L497.3 503.3 L497.5 506.3 L497.6 486.0 L497.8 482.4 L497.9 481.4 L498.0 490.1 L498.1 481.9 L498.2 479.6 L498.3 495.9 L498.4 508.8 L498.6 489.8 L498.7 495.9 L498.9 493.6 L499.0 493.6 L499.1 491.4 L499.2 482.5 L499.3 494.7 L499.5 489.8 L499.6 495.2 L499.7 499.2 L499.8 482.5 L500.0 519.3 L500.1 493.5 L500.2 495.4 L500.3 493.9 L500.4 505.9 L500.6 487.9 L500.7 502.2 L500.8 512.6 L500.9 476.3 L501.1 504.1 L501.2 495.5 L501.4 495.9 L501.5 501.1 L501.6 501.9 L501.8 495.8 L501.9 492.9 L502.0 492.0 L502.2 477.1 L502.3 491.0 L502.5 497.1 L502.6 482.6 L502.8 494.2 L502.9 498.0 L503.0 508.5 L503.1 495.2 L503.2 492.0 L503.4 503.6 L503.5 494.2 L503.6 491.0 L503.8 499.6 L503.9 518.5 L504.0 505.6 L504.2 476.3 L504.3 504.4 L504.5 500.0 L504.6 502.2 L504.7 507.8 L504.9 507.0 L505.0 511.9 L505.1 505.7 L505.3 475.8 L505.4 482.9 L505.5 492.0 L505.6 476.7 L505.8 503.9 L505.9 481.7 L506.1 500.5 L506.2 499.0 L506.3 515.0 L506.5 504.5 L506.6 514.6 L506.7 500.5 L506.8 514.3 L506.9 479.7 L507.1 496.1 L507.3 480.5 L507.4 494.8 L507.5 483.5 L507.6 486.8 L507.7 479.8 L507.9 499.1 L508.1 498.6 L508.2 491.6 L508.3 487.4 L508.4 484.3 L508.6 496.6 L508.7 491.2 L508.8 480.8 L508.9 482.5 L509.1 484.9 L509.2 495.8 L509.3 484.3 L509.5 472.7 L509.6 483.4 L509.7 485.7 L509.8 505.3 L509.9 473.3 L510.1 501.4 L510.2 493.7 L510.4 494.7 L510.5 506.6 L510.7 463.4 L510.8 493.2 L510.9 507.0 L511.1 476.5 L511.2 482.2 L511.3 467.3 L511.5 484.9 L511.6 474.6 L511.7 477.1 L511.8 478.4 L512.0 500.9 L512.1 481.4 L512.2 506.6 L512.4 493.9 L512.5 511.6 L512.6 475.0 L512.8 476.0 L512.9 478.1 L513.0 506.1 L513.1 488.3 L513.3 494.6 L513.4 511.0 L513.5 507.6 L513.6 495.8 L513.7 494.9 L513.9 500.5 L514.0 495.0 L514.2 484.8 L514.3 511.1 L514.4 507.1 L514.6 514.2 L514.7 492.3 L514.8 518.8 L515.0 514.0 L515.1 503.0 L515.2 522.1 L515.3 512.3 L515.4 508.0 L515.6 508.3 L515.7 508.0 L515.8 524.5 L516.0 508.8 L516.1 508.9 L516.3 512.6 L516.4 535.1 L516.5 523.7 L516.6 497.3 L516.8 526.3 L516.9 522.8 L517.1 537.9 L517.2 531.9 L517.3 515.6 L517.5 514.3 L517.6 502.6 L517.7 531.1 L517.8 524.2 L518.0 541.5 L518.1 499.7 L518.2 511.0 L518.4 513.6 L518.5 514.7 L518.6 498.7 L518.7 524.6 L518.8 524.6 L519.0 498.2 L519.1 530.5 L519.2 516.0 L519.3 518.8 L519.5 523.8 L519.6 531.7 L519.8 519.4 L519.9 511.1 L520.1 522.0 L520.2 521.4 L520.3 548.2 L520.5 541.6 L520.6 513.4 L520.7 526.2 L520.8 545.7 L521.0 527.3 L521.1 545.5 L521.2 553.5 L521.4 530.5 L521.5 540.8 L521.7 546.4 L521.8 546.1 L521.9 561.4 L522.0 554.0 L522.2 556.1 L522.3 560.5 L522.5 559.3"/><path d="M534.0 576.4 L534.2 572.0 L534.3 572.9 L534.4 565.3 L534.5 567.1 L534.6 559.4 L534.8 548.0 L534.9 563.2 L535.0 547.8 L535.2 544.9 L535.4 552.6 L535.5 535.1 L535.6 549.5 L535.7 537.2 L535.9 539.8 L536.0 541.9 L536.1 545.1 L536.2 532.1 L536.3 524.4 L536.4 541.5 L536.6 517.5 L536.7 540.6 L536.9 515.4 L537.0 544.2 L537.1 511.2 L537.3 530.4 L537.4 520.8 L537.5 511.2 L537.7 530.3 L537.8 526.6 L537.9 531.2 L538.0 506.6 L538.1 512.1 L538.3 534.3 L538.4 496.5 L538.5 534.2 L538.6 503.5 L538.8 498.7 L538.9 515.7 L539.0 512.5 L539.1 505.2 L539.3 532.2 L539.4 500.2 L539.5 513.8 L539.6 509.8 L539.7 491.5 L539.9 513.1 L540.0 501.7 L540.1 499.4 L540.3 511.7 L540.4 492.5 L540.5 495.3 L540.7 508.6 L540.8 526.9 L540.9 483.1 L541.0 494.6 L541.2 491.9 L541.3 517.8 L541.5 502.0 L541.6 513.0 L541.7 511.0 L541.8 493.2 L542.0 512.5 L542.1 490.6 L542.3 488.2 L542.4 479.1 L542.5 493.8 L542.7 504.5 L542.8 489.6 L542.9 483.2 L543.0 480.7 L543.2 510.0 L543.3 501.2 L543.5 507.7 L543.6 492.7 L543.7 499.4 L543.9 505.7 L544.0 487.1 L544.1 505.2 L544.2 504.3 L544.3 491.6 L544.4 505.5 L544.5 500.2 L544.7 517.4 L544.8 505.5 L544.9 483.5 L545.0 494.5 L545.1 498.7 L545.3 493.2 L545.4 491.8 L545.5 498.9 L545.7 483.8 L545.8 484.9 L545.9 473.6 L546.1 481.1 L546.2 483.9 L546.3 501.7 L546.4 494.8 L546.6 502.0 L546.7 484.2 L546.8 481.9 L547.0 501.2 L547.1 485.7 L547.2 504.5 L547.4 488.3 L547.6 497.2 L547.7 477.0 L547.8 507.5 L548.0 507.1 L548.1 485.5 L548.2 485.8 L548.3 491.2 L548.5 463.5 L548.6 488.0 L548.7 478.8 L548.9 497.3 L549.0 489.5 L549.1 488.2 L549.2 484.4 L549.3 498.9 L549.4 500.5 L549.6 473.1 L549.7 490.4 L549.8 471.2 L550.0 493.5 L550.1 490.1 L550.2 499.0 L550.4 486.8 L550.5 498.6 L550.6 510.4 L550.8 501.2 L550.9 501.1 L551.0 495.9 L551.2 496.5 L551.3 513.8 L551.5 500.2 L551.6 479.1 L551.7 480.0 L551.8 499.4 L552.0 517.2 L552.1 497.8 L552.2 507.2 L552.4 504.1 L552.5 480.2 L552.6 498.7 L552.8 497.7 L552.9 509.8 L553.1 484.6 L553.2 490.5 L553.3 516.3 L553.4 501.3 L553.5 497.9 L553.6 506.4 L553.8 511.2 L553.9 511.6 L554.0 511.5 L554.1 527.8 L554.2 519.2 L554.4 502.6 L554.5 519.7 L554.6 502.7 L554.8 517.5 L554.9 497.3 L555.0 504.1 L555.2 515.7 L555.3 504.9 L555.4 523.2 L555.5 517.6 L555.6 529.5 L555.8 504.5 L555.9 521.2 L556.0 520.7 L556.2 537.3 L556.3 519.1 L556.4 533.5 L556.6 523.9 L556.7 519.6 L556.9 519.3 L557.0 526.0 L557.1 542.7 L557.2 530.4 L557.4 531.0 L557.5 544.7 L557.7 531.0 L557.8 528.1 L557.9 529.3 L558.0 534.9 L558.2 533.5 L558.3 537.1 L558.4 532.8 L558.6 523.5 L558.7 523.2 L558.9 535.8 L559.0 538.8 L559.1 526.0 L559.2 537.2 L559.4 543.3 L559.5 533.7 L559.6 538.7 L559.7 535.2 L559.9 541.6 L560.0 541.8 L560.1 542.2 L560.2 537.1 L560.3 537.6 L560.5 516.0 L560.6 544.4 L560.7 533.4 L560.8 557.2 L561.0 545.3 L561.1 537.9 L561.2 556.4 L561.3 535.1 L561.4 547.0 L561.6 543.6 L561.7 529.3 L561.9 544.8 L562.0 552.1 L562.2 541.8 L562.3 519.3 L562.5 545.6 L562.6 557.2 L562.7 544.3 L562.9 544.7 L563.0 526.1 L563.1 531.9 L563.2 550.3 L563.3 539.6 L563.4 547.0 L563.6 547.1 L563.7 553.1 L563.9 554.2 L564.0 557.2 L564.1 529.3 L564.3 548.5 L564.4 537.6 L564.5 557.3 L564.7 553.0 L564.8 552.3 L564.9 550.1 L565.1 559.8 L565.2 542.0 L565.3 547.1 L565.4 550.3 L565.5 565.1 L565.7 567.7 L565.8 557.3 L566.0 551.1 L566.1 560.5 L566.2 568.7 L566.4 578.1 L566.5 535.9 L566.6 555.5 L566.8 542.9 L566.9 561.4 L567.0 549.1 L567.1 544.8 L567.2 579.8 L567.4 557.3 L567.5 566.6 L567.6 541.3 L567.8 563.0 L567.9 564.3 L568.0 557.2 L568.2 557.7 L568.3 566.6 L568.4 547.9 L568.5 566.3 L568.7 572.3 L568.8 566.5 L568.9 571.7 L569.0 563.4 L569.1 569.9 L569.2 562.5 L569.4 570.0 L569.5 571.8 L569.6 577.0 L569.7 577.2 L569.8 562.5 L570.0 569.0 L570.1 562.5 L570.2 578.6 L570.4 596.9 L570.5 587.9 L570.6 584.7 L570.7 578.4 L570.9 574.5 L571.0 565.0 L571.1 572.0 L571.2 583.8 L571.4 557.7 L571.5 587.6 L571.6 595.1 L571.8 573.4 L571.9 580.5 L572.1 579.7 L572.2 585.3 L572.3 592.1 L572.5 574.7 L572.6 599.0 L572.8 583.6 L572.9 587.4 L573.0 603.0 L573.1 583.0 L573.2 596.2 L573.4 584.2 L573.5 581.3 L573.6 589.3 L573.8 592.2 L573.9 583.9 L574.0 586.5 L574.2 582.7 L574.3 584.6 L574.4 595.6 L574.6 576.2 L574.7 586.5 L574.8 595.7 L574.9 570.8 L575.1 575.1 L575.2 567.0 L575.3 577.6 L575.5 572.9 L575.6 578.6 L575.7 581.2 L575.9 588.7 L576.0 580.2 L576.1 566.4 L576.3 592.0 L576.4 586.6 L576.5 585.7 L576.7 585.8 L576.8 580.0 L577.0 599.3 L577.1 582.9 L577.2 568.6 L577.3 570.3 L577.5 580.3 L577.6 596.3 L577.7 585.1 L577.9 594.6 L578.0 590.6 L578.1 577.2 L578.3 596.1 L578.4 583.8 L578.5 597.0 L578.7 597.1 L578.8 587.2 L579.0 588.2 L579.1 592.6 L579.3 572.9 L579.4 581.4 L579.5 575.2 L579.6 586.1 L579.8 588.1 L579.9 580.3 L580.1 586.3 L580.2 592.8 L580.3 588.4 L580.5 589.1 L580.6 588.8 L580.7 585.6 L580.8 586.7 L581.0 571.5 L581.1 599.7 L581.2 586.2 L581.4 584.3 L581.5 580.1 L581.6 588.6 L581.7 582.9 L581.8 582.2 L582.0 604.2 L582.1 599.7 L582.2 604.1 L582.4 597.4 L582.5 591.8 L582.6 602.6 L582.8 593.4 L582.9 592.3 L583.0 598.1 L583.2 589.8 L583.3 579.4 L583.5 575.7 L583.6 582.0 L583.7 581.2 L583.9 593.6 L584.0 590.2 L584.1 596.3 L584.2 575.5 L584.3 598.7 L584.5 583.9 L584.6 582.6 L584.7 575.1 L584.9 592.7 L585.0 597.0 L585.1 575.2 L585.3 594.6 L585.4 597.6 L585.5 597.8 L585.6 578.5 L585.7 583.9 L585.9 593.0 L586.0 577.0 L586.1 579.5 L586.3 605.9 L586.4 582.4 L586.5 601.1 L586.7 597.5 L586.8 575.4 L586.9 599.2 L587.1 605.9 L587.2 592.2 L587.4 582.5 L587.5 593.1 L587.6 595.0 L587.7 598.7 L587.8 598.2 L588.0 598.6 L588.1 591.9 L588.3 592.2 L588.4 603.6 L588.5 579.3 L588.6 591.2 L588.8 598.3 L588.9 582.6 L589.0 597.0 L589.2 575.5 L589.3 592.4 L589.4 590.5 L589.6 594.8 L589.7 592.1 L589.8 599.4 L590.0 591.4 L590.1 584.2 L590.3 593.5 L590.4 582.1 L590.5 587.4 L590.7 592.8 L590.8 589.3 L590.9 591.6 L591.1 594.9 L591.2 592.6 L591.3 592.5 L591.4 583.1 L591.6 578.7 L591.7 590.9 L591.8 591.0 L592.0 583.7 L592.1 594.3 L592.2 599.1 L592.4 596.9 L592.5 587.0 L592.6 599.6 L592.7 590.2 L592.8 585.7 L593.0 606.5 L593.1 606.3 L593.2 587.5 L593.3 598.8 L593.4 590.3 L593.5 600.3 L593.7 600.4 L593.8 585.4 L594.0 595.0 L594.1 594.6 L594.2 595.5 L594.4 594.6 L594.5 596.2 L594.6 597.3 L594.8 609.3 L594.9 587.0 L595.1 599.1 L595.2 579.1 L595.3 586.9 L595.5 598.3 L595.6 604.9 L595.7 590.9 L595.9 600.7 L596.0 604.4 L596.1 583.8 L596.2 581.4 L596.4 592.3 L596.6 583.0 L596.7 611.4 L596.8 591.0 L596.9 594.5 L597.0 596.1 L597.2 586.7 L597.3 595.6 L597.4 588.3 L597.6 602.8 L597.7 593.4 L597.9 588.6 L598.0 602.3 L598.1 597.9 L598.2 602.1 L598.3 609.7 L598.5 599.8 L598.6 597.8 L598.7 594.5 L598.8 587.7 L598.9 598.8 L599.1 586.8 L599.2 601.4 L599.4 610.2 L599.5 597.2 L599.6 601.7 L599.8 602.1 L599.9 596.6 L600.1 588.9 L600.2 601.7 L600.4 582.7 L600.5 595.1 L600.7 596.8 L600.8 587.9 L601.0 602.9 L601.1 597.8 L601.2 603.7 L601.4 584.6 L601.5 589.8 L601.6 576.0 L601.7 589.3 L601.8 595.9 L602.0 578.5 L602.1 585.1 L602.2 583.3 L602.3 590.2 L602.5 606.5 L602.6 591.1 L602.7 586.6 L602.8 586.0 L603.0 589.1 L603.1 588.3 L603.2 584.3 L603.3 605.4 L603.5 597.3 L603.6 578.1 L603.7 591.9 L603.9 581.2 L604.0 578.7 L604.1 582.3 L604.2 582.4 L604.4 591.9 L604.5 580.6 L604.7 586.8 L604.8 572.1 L604.9 586.7 L605.0 586.5 L605.2 590.2 L605.3 598.6 L605.4 571.3 L605.5 592.6 L605.6 592.6 L605.8 596.0 L605.9 570.6 L606.1 596.2 L606.2 584.8 L606.4 587.1 L606.5 595.8 L606.6 589.2 L606.7 598.8 L606.8 578.6 L606.9 591.2 L607.0 582.3 L607.1 573.9 L607.3 589.1 L607.4 584.0 L607.5 572.0 L607.6 597.6 L607.7 569.9 L607.8 574.8 L607.9 582.1 L608.1 591.3 L608.2 586.3 L608.4 588.9 L608.5 567.2 L608.6 582.7 L608.8 574.8 L608.9 591.8 L609.0 569.0 L609.2 597.0 L609.3 570.0 L609.4 568.4 L609.5 596.4 L609.7 582.0 L609.8 582.2 L609.9 584.7 L610.1 580.1 L610.2 592.7 L610.4 568.7 L610.5 571.9 L610.7 575.2 L610.8 585.4 L610.9 588.8 L611.1 590.6 L611.2 580.7 L611.4 577.9 L611.5 590.9 L611.6 583.4 L611.7 586.0 L611.9 579.6 L612.0 572.7 L612.1 582.9 L612.3 573.7 L612.4 566.8 L612.6 591.2 L612.7 583.6 L612.8 588.2 L613.0 570.7 L613.1 566.8 L613.2 578.0 L613.3 591.2 L613.5 574.9 L613.6 577.7 L613.7 586.9 L613.8 577.1 L613.9 576.8 L614.0 577.7 L614.1 585.8 L614.3 582.9 L614.4 574.6 L614.5 580.4 L614.6 578.7 L614.7 590.2 L614.9 578.4 L615.0 584.3 L615.1 585.9 L615.3 575.1 L615.4 581.4 L615.5 566.3 L615.6 574.5 L615.8 572.5 L615.9 583.2 L616.1 580.1 L616.2 576.2 L616.4 565.8 L616.5 579.0 L616.6 578.7 L616.7 578.3 L616.9 569.3 L617.0 586.3 L617.1 580.2 L617.3 583.4 L617.4 570.6 L617.5 574.2 L617.7 566.4 L617.8 573.0 L617.9 573.4 L618.1 583.3 L618.2 573.9 L618.3 575.6 L618.5 575.7 L618.6 581.8 L618.7 578.6 L618.8 580.1 L619.0 580.4 L619.1 564.4 L619.2 582.5 L619.4 580.7 L619.5 576.6 L619.6 575.3 L619.7 573.8 L619.9 569.6 L620.0 582.9 L620.1 583.7 L620.3 578.7 L620.4 567.7 L620.5 578.5 L620.6 563.0 L620.7 567.8 L620.9 579.3 L621.0 580.9 L621.2 575.9 L621.3 579.3 L621.5 567.3 L621.6 574.1 L621.7 564.1 L621.9 578.1 L622.0 583.2 L622.1 577.0 L622.2 569.4 L622.4 568.4 L622.5 567.4 L622.6 561.6 L622.7 578.8 L622.9 574.5 L623.0 575.0 L623.1 563.4 L623.3 575.8 L623.4 566.2 L623.5 569.1 L623.6 560.9 L623.8 574.1 L623.9 569.2 L624.0 572.2 L624.2 572.6 L624.3 568.3 L624.5 569.3 L624.6 570.1 L624.7 578.2 L624.8 562.0 L625.0 575.9 L625.1 567.7 L625.2 571.6 L625.3 574.9 L625.4 570.7 L625.6 567.5 L625.7 577.7 L625.8 580.3 L625.9 570.4 L626.1 577.9 L626.2 567.5 L626.3 570.2 L626.4 568.5 L626.6 569.9 L626.7 564.5 L626.8 566.5 L626.9 558.8 L627.1 561.5 L627.2 558.7 L627.3 566.0 L627.5 573.3 L627.6 573.4 L627.7 565.8 L627.8 569.2 L627.9 576.1 L628.1 567.7 L628.2 566.0 L628.4 569.4 L628.6 566.9 L628.7 567.5 L628.8 566.8 L628.9 566.6 L629.0 566.0 L629.2 570.8 L629.3 558.4 L629.5 574.7 L629.6 564.4 L629.8 562.6 L629.9 570.1 L630.0 564.5 L630.2 566.2 L630.3 555.1 L630.4 575.3 L630.5 572.6 L630.7 565.0 L630.8 553.5 L630.9 566.8 L631.1 570.3 L631.2 560.7 L631.3 573.7 L631.4 567.4 L631.6 551.9 L631.7 549.7 L631.8 566.7 L631.9 565.2 L632.1 571.6 L632.2 558.1 L632.3 552.2 L632.5 566.3 L632.6 562.4 L632.7 562.4 L632.8 561.3 L632.9 566.3 L633.0 548.5 L633.2 544.1 L633.3 566.7 L633.4 543.7 L633.5 548.8 L633.7 553.4 L633.8 553.6 L633.9 564.1 L634.0 549.4 L634.1 548.4 L634.3 555.9 L634.4 547.1 L634.5 560.3 L634.6 545.0 L634.7 534.6 L634.9 557.0 L635.0 547.5 L635.1 549.3 L635.2 537.4 L635.4 539.8 L635.6 538.3 L635.7 550.8 L635.8 544.4 L635.9 546.2 L636.1 545.6 L636.2 541.9 L636.3 527.2 L636.5 565.0 L636.6 561.7 L636.7 544.9 L636.8 536.4 L637.0 564.0 L637.1 541.9 L637.2 549.4 L637.3 552.7 L637.4 532.3 L637.6 560.6 L637.7 544.6 L637.8 555.2 L638.0 527.9 L638.1 534.3 L638.3 535.3 L638.4 548.2 L638.5 533.8 L638.6 547.7 L638.8 529.6 L638.9 545.2 L639.1 530.7 L639.2 523.5 L639.4 537.0 L639.5 518.5 L639.6 533.8 L639.7 544.3 L639.8 551.9 L639.9 537.6 L640.1 537.4 L640.2 538.9 L640.3 552.9 L640.5 532.2 L640.6 534.4 L640.7 554.4 L640.9 553.7 L641.0 539.1 L641.1 537.6 L641.2 558.7 L641.4 560.8 L641.6 548.8 L641.7 538.3 L641.8 545.2 L641.9 554.7 L642.1 535.0 L642.2 575.7 L642.3 581.3 L642.5 546.4 L642.6 569.5 L642.7 539.7 L642.9 564.6 L643.0 543.1 L643.1 585.2 L643.3 559.8 L643.4 579.5 L643.6 552.3 L643.7 567.8 L643.8 548.6 L644.0 550.0 L644.1 559.3 L644.2 561.4 L644.3 568.8 L644.4 571.6 L644.6 565.6 L644.7 569.5 L644.8 568.2 L644.9 559.0 L645.0 550.9 L645.2 563.3 L645.3 564.9 L645.4 566.6 L645.5 574.2 L645.6 578.1 L645.8 553.9 L645.9 568.1 L646.1 563.5 L646.2 574.3 L646.3 563.8 L646.4 561.9 L646.6 574.5 L646.7 559.6 L646.9 556.2 L647.0 568.6 L647.1 564.6 L647.2 575.5 L647.4 558.9 L647.5 572.7 L647.7 568.9 L647.8 578.6 L647.9 574.6 L648.0 568.4 L648.1 558.0 L648.3 561.5 L648.4 546.1 L648.5 558.3 L648.6 566.6 L648.8 552.8 L648.9 576.3 L649.0 567.6 L649.1 580.8 L649.3 568.3 L649.4 578.3 L649.5 556.8 L649.6 559.5 L649.7 586.3 L649.9 559.4 L650.0 567.8 L650.1 572.0 L650.2 571.0 L650.4 577.8 L650.5 567.3 L650.6 568.0 L650.8 582.6 L650.9 565.0 L651.0 564.7 L651.1 590.4 L651.3 559.3 L651.4 553.0 L651.5 578.3 L651.7 566.2 L651.8 555.2 L651.9 560.2 L652.1 577.2 L652.2 567.6 L652.4 566.9 L652.5 562.4 L652.6 571.4 L652.8 554.0 L652.9 564.9 L653.0 567.9 L653.1 577.8 L653.3 559.0 L653.4 575.2 L653.5 589.0 L653.6 586.0 L653.7 549.6 L653.9 579.1 L654.0 570.9 L654.2 560.8 L654.3 573.0 L654.4 577.1 L654.6 585.8 L654.7 568.1 L654.8 581.0 L654.9 587.7 L655.1 588.9 L655.2 575.9 L655.3 563.7 L655.5 569.6 L655.6 558.7 L655.7 561.1 L655.9 567.7 L656.0 563.2 L656.1 572.8 L656.3 563.4 L656.4 568.9 L656.5 567.0 L656.7 581.8 L656.8 566.9 L656.9 540.6 L657.0 557.3 L657.2 554.4 L657.3 558.1 L657.4 570.3 L657.6 567.6 L657.7 538.1 L657.8 558.9 L657.9 560.9 L658.1 575.5 L658.2 560.2 L658.3 546.0 L658.5 552.0 L658.6 573.0 L658.8 557.0 L658.9 554.7 L659.0 559.8 L659.2 553.9 L659.3 560.5 L659.4 561.1 L659.6 543.7 L659.7 541.3 L659.8 559.0 L659.9 543.4 L660.1 537.2 L660.2 567.1 L660.4 533.0 L660.5 562.2 L660.6 559.1 L660.7 542.6 L660.9 556.0 L661.0 565.0 L661.1 536.1 L661.3 558.5 L661.4 520.6 L661.5 539.1 L661.6 546.0 L661.7 537.3 L661.9 543.7 L662.0 555.6 L662.1 538.7 L662.3 552.5 L662.4 547.9 L662.5 523.9 L662.6 528.1 L662.7 542.2 L662.8 533.3 L663.0 546.4 L663.1 538.2 L663.2 519.3 L663.4 540.4 L663.5 530.6 L663.6 524.7 L663.7 557.4 L663.8 533.3 L664.0 526.0 L664.1 547.8 L664.2 534.8 L664.3 535.5 L664.4 522.0 L664.6 525.1 L664.7 522.9 L664.8 524.9 L665.0 510.6 L665.1 535.3 L665.2 507.8 L665.3 534.4 L665.5 516.8 L665.6 518.4 L665.7 509.9 L665.9 536.3 L666.0 512.3 L666.1 547.0 L666.3 525.2 L666.4 547.4 L666.6 530.9 L666.7 514.9 L666.8 520.5 L667.0 518.4 L667.1 519.0 L667.2 517.1 L667.3 515.3 L667.4 523.7 L667.6 496.1 L667.7 542.3 L667.8 500.6 L667.9 510.4 L668.1 539.5 L668.2 505.7 L668.3 515.4 L668.5 528.6 L668.6 515.5 L668.7 495.3 L668.8 508.0 L669.0 501.4 L669.1 492.4 L669.2 507.4 L669.4 496.3 L669.5 518.2 L669.6 524.3 L669.8 534.9 L669.9 508.8 L670.0 518.9 L670.1 504.8 L670.3 526.1 L670.4 515.3 L670.5 503.4 L670.6 532.6 L670.7 508.0 L670.9 536.7 L671.0 501.3 L671.2 506.9 L671.3 518.8 L671.4 487.4 L671.5 504.4 L671.6 533.4 L671.8 500.6 L671.9 520.3 L672.0 531.5 L672.1 494.0 L672.2 499.5 L672.4 487.6 L672.5 528.0 L672.6 487.6 L672.7 515.6 L672.9 504.8 L673.0 501.6 L673.2 523.6 L673.3 508.1 L673.4 511.3 L673.5 514.5 L673.7 510.6 L673.8 526.9 L674.0 518.3 L674.1 511.7 L674.2 525.7 L674.3 512.6 L674.5 506.8 L674.6 520.5 L674.7 520.0 L674.8 515.9 L675.0 529.3 L675.1 515.7 L675.2 487.8 L675.4 493.1 L675.5 522.3 L675.6 531.0 L675.7 516.7 L675.9 506.8 L676.0 487.7 L676.1 498.4 L676.2 507.3 L676.3 525.6 L676.5 500.1 L676.6 515.7 L676.7 503.9 L676.9 518.2 L677.1 498.7 L677.2 527.5 L677.3 508.2 L677.4 495.7 L677.5 521.2 L677.7 516.7 L677.8 517.5 L677.9 517.4 L678.0 524.1 L678.2 503.6 L678.3 518.9 L678.4 512.0 L678.5 499.8 L678.7 529.4 L678.8 529.2 L678.9 519.8 L679.0 518.7 L679.1 487.1 L679.3 526.1 L679.4 504.7 L679.5 504.2 L679.7 512.1 L679.8 523.3 L679.9 534.4 L680.1 541.5 L680.2 504.4 L680.3 537.3 L680.4 525.5 L680.5 535.5 L680.7 525.7 L680.8 549.8 L680.9 504.4 L681.1 514.8 L681.2 543.1 L681.3 532.1 L681.5 541.8 L681.6 545.7 L681.7 536.2 L681.8 542.9 L682.0 522.6 L682.1 544.3 L682.3 530.9 L682.4 521.6 L682.5 535.8 L682.6 540.2 L682.8 550.6 L682.9 553.5 L683.0 556.1 L683.2 563.2 L683.3 551.7 L683.5 563.0 L683.6 565.1 L683.7 571.1 L683.8 561.9 L683.9 576.4 L684.0 574.4 L684.2 580.4 L684.3 578.9 L684.4 576.0 L684.5 576.5"/><path d="M220.6 513.7L220.9 542.0L221.3 513.7M222.0 507.5L222.3 480.0L222.7 507.5M233.6 482.1L233.9 455.2L234.3 482.1M244.9 517.6L245.2 535.0L245.6 517.6M295.6 570.4L295.9 584.0L296.3 570.4M316.3 555.5L316.6 578.0L317.0 555.5M336.2 478.5L336.5 458.6L336.9 478.5M392.5 490.1L392.8 448.0L393.2 490.1M396.3 479.2L396.6 448.0L397.0 479.2M393.8 485.1L394.1 519.0L394.5 485.1M459.3 489.6L459.6 471.0L460.0 489.6M471.3 514.0L471.6 533.0L472.0 514.0M488.2 523.3L488.5 559.5L488.9 523.3M510.6 487.4L510.9 458.2L511.3 487.4M549.2 484.5L549.5 461.8L549.9 484.5M574.5 582.8L574.8 607.7L575.2 582.8M598.3 596.3L598.6 614.8L599.0 596.3M639.3 534.5L639.6 513.8L640.0 534.5M670.4 508.3L670.7 595.6L671.1 508.3M669.4 506.7L669.7 487.0L670.1 506.7M545.0 492.8L545.3 465.0L545.7 492.8M566.0 555.4L566.3 593.0L566.7 555.4"/></g>
<text x="216.3" y="652.8" font-size="16.2" font-weight="normal" fill="#000" text-anchor="start" textLength="44.9" lengthAdjust="spacingAndGlyphs">00:00</text>
<text x="432.3" y="652.8" font-size="16.2" font-weight="normal" fill="#000" text-anchor="start" textLength="44.9" lengthAdjust="spacingAndGlyphs">12:00</text>
<text x="648.3" y="652.8" font-size="16.2" font-weight="normal" fill="#000" text-anchor="start" textLength="44.9" lengthAdjust="spacingAndGlyphs">00:00</text>
<text x="216.6" y="672.6" font-size="16.2" font-weight="normal" fill="#000" text-anchor="start" textLength="44.6" lengthAdjust="spacingAndGlyphs">4.225</text>
<text x="432.6" y="672.6" font-size="16.2" font-weight="normal" fill="#000" text-anchor="start" textLength="44.6" lengthAdjust="spacingAndGlyphs">5.756</text>
<text x="648.6" y="672.6" font-size="16.2" font-weight="normal" fill="#000" text-anchor="start" textLength="44.6" lengthAdjust="spacingAndGlyphs">3.179</text>
<text x="201.1" y="692.5" font-size="16.2" font-weight="normal" fill="#000" text-anchor="start" textLength="60.1" lengthAdjust="spacingAndGlyphs">-10.580</text>
<text x="427.0" y="692.5" font-size="16.2" font-weight="normal" fill="#000" text-anchor="start" textLength="50.2" lengthAdjust="spacingAndGlyphs">-1.544</text>
<text x="633.1" y="692.5" font-size="16.2" font-weight="normal" fill="#000" text-anchor="start" textLength="60.1" lengthAdjust="spacingAndGlyphs">-16.190</text>
<text x="216.6" y="712.5" font-size="16.2" font-weight="normal" fill="#000" text-anchor="start" textLength="44.6" lengthAdjust="spacingAndGlyphs">2.247</text>
<text x="432.6" y="712.5" font-size="16.2" font-weight="normal" fill="#000" text-anchor="start" textLength="44.6" lengthAdjust="spacingAndGlyphs">5.398</text>
<text x="648.6" y="712.5" font-size="16.2" font-weight="normal" fill="#000" text-anchor="start" textLength="44.6" lengthAdjust="spacingAndGlyphs">8.125</text>
<text x="216.6" y="732.4" font-size="16.2" font-weight="normal" fill="#000" text-anchor="start" textLength="44.6" lengthAdjust="spacingAndGlyphs">4.373</text>
<text x="432.6" y="732.4" font-size="16.2" font-weight="normal" fill="#000" text-anchor="start" textLength="44.6" lengthAdjust="spacingAndGlyphs">5.760</text>
<text x="648.6" y="732.4" font-size="16.2" font-weight="normal" fill="#000" text-anchor="start" textLength="44.6" lengthAdjust="spacingAndGlyphs">3.447</text>
<text x="156.6" y="672.6" font-size="16.2" font-weight="normal" fill="#000" text-anchor="start" textLength="11.2" lengthAdjust="spacingAndGlyphs">R</text>
<text x="167.6" y="677.2" font-size="10.5" font-weight="bold" fill="#000" text-anchor="start" textLength="7.2" lengthAdjust="spacingAndGlyphs">E</text>
<text x="137.6" y="692.5" font-size="16.2" font-weight="normal" fill="#000" text-anchor="start" textLength="37.4" lengthAdjust="spacingAndGlyphs">MLat</text>
<text x="143.6" y="712.5" font-size="16.2" font-weight="normal" fill="#000" text-anchor="start" textLength="31.4" lengthAdjust="spacingAndGlyphs">MLT</text>
<text x="165.4" y="732.4" font-size="16.2" font-weight="normal" fill="#000" text-anchor="start" textLength="9" lengthAdjust="spacingAndGlyphs">L</text>
<text x="252.0" y="756.8" font-size="16.2" font-weight="normal" fill="#000" text-anchor="start" textLength="405" lengthAdjust="spacingAndGlyphs">2012-12-01 (336) 23:00 to 2012-12-03 (338) 01:00</text>
</g>
</svg>
<div class="abs" style="left:346px;top:358px;width:246px;height:90px;box-sizing:border-box;border:1px solid #9a9a9a;border-radius:5px 5px 0 0;background:#dcdcdc;"></div>
<div class="abs" style="left:347px;top:359px;width:244px;height:25px;border-radius:4px 4px 0 0;background:linear-gradient(#e9e9e9,#d4d4d4);"></div>
<div class="abs" style="left:349px;top:384px;width:240px;height:61px;background:#fdfdfd;"></div>
<div class="abs" style="left:349px;top:411px;width:221px;height:20px;box-sizing:border-box;border:1px solid #7a8a99;border-top-color:#6382bf;border-left-color:#6382bf;background:#eeeeee;"></div>
<div class="abs" style="left:350px;top:412px;width:111px;height:18px;background:#a3b8cc;"></div>
<div class="abs btn" style="left:569px;top:411px;width:21px;height:20px;"></div>
<svg width="1345" height="916" viewBox="0 0 1345 916">
<path d="M359.3 368.6 L368.3 368.6 L363.8 374 Z" fill="#a2a2a2"/>
<text x="410.6" y="377.9" font-size="13.2" font-weight="bold" fill="#7c7c7c" text-anchor="start" textLength="115.5" lengthAdjust="spacingAndGlyphs">Progress Monitor</text>
<path d="M569.2 368.2l7 7.2M576.2 368.2l-7 7.2" stroke="#a8a8a8" stroke-width="2.4" fill="none"/>
<text x="413.6" y="396.8" font-size="15.2" font-weight="bold" fill="#333333" text-anchor="start" textLength="111" lengthAdjust="spacingAndGlyphs">running batch</text>
<text x="362.6" y="409.2" font-size="9.2" font-weight="normal" fill="#222222" text-anchor="start" textLength="215" lengthAdjust="spacingAndGlyphs">write /hom...walk3/product_20121216_12.png</text>
<text x="376.2" y="442.9" font-size="13" font-weight="bold" fill="#333333" text-anchor="start" textLength="186" lengthAdjust="spacingAndGlyphs">32/62 (47.9/min, eta 38.8 s)</text>
<rect x="572.5" y="414.5" width="13" height="13" rx="2.5" fill="#e0414c" stroke="#b3202c" stroke-width="1"/>
<path d="M576 418l6 6M582 418l-6 6" stroke="#ffffff" stroke-width="2.3" fill="none"/>
</svg>
</body>
</html>
